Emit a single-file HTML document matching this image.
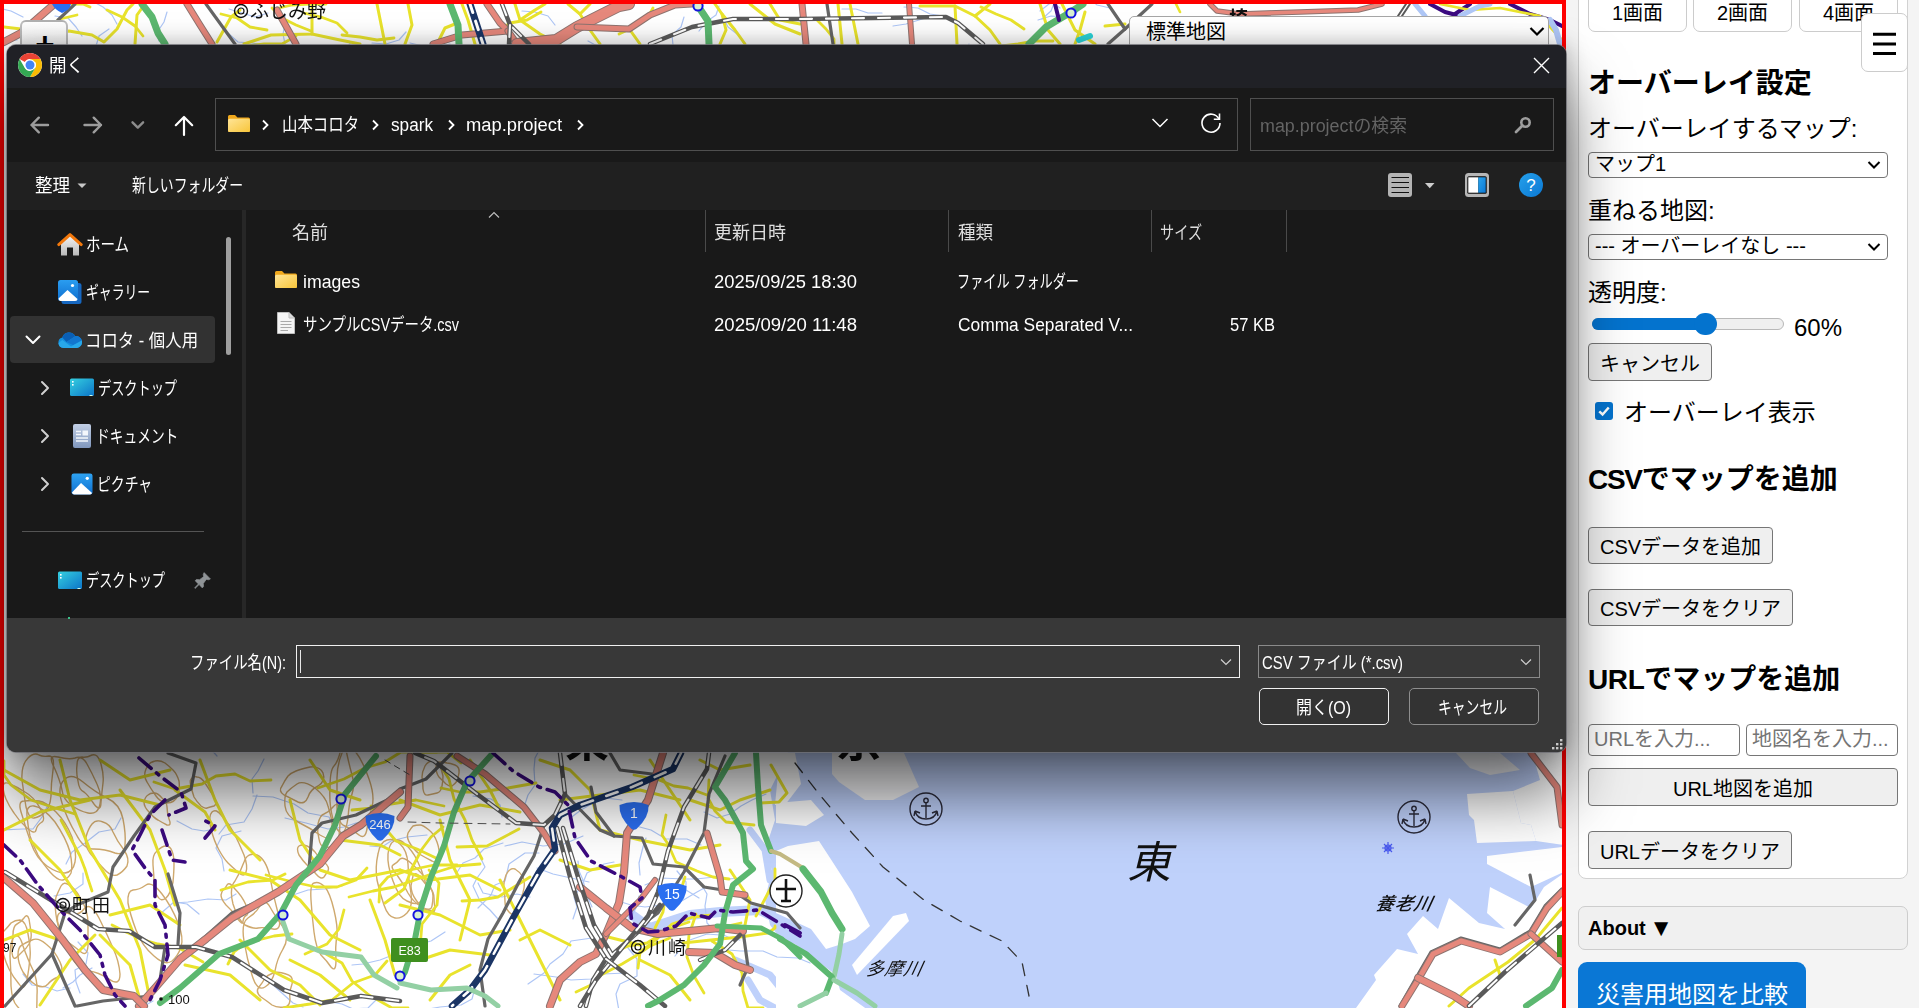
<!DOCTYPE html>
<html lang="ja">
<head>
<meta charset="utf-8">
<title>map.project</title>
<style>
*{box-sizing:border-box;margin:0;padding:0}
html,body{width:1919px;height:1008px;overflow:hidden;background:#f4f4f4;font-family:"Liberation Sans","Noto Sans CJK JP",sans-serif;color:#000}
.abs{position:absolute}
#map{position:absolute;left:0;top:0;width:1566px;height:1020px;border:4px solid #ff0000;background:#fff;overflow:hidden}
#mapsvg{position:absolute;left:0;top:0;filter:blur(.45px)}
/* ---------- dialog ---------- */
#dlg{position:absolute;left:7px;top:45px;width:1559px;height:707px;border-radius:9px;background:#191919;overflow:hidden;color:#fff;font-family:"Liberation Sans","Noto Sans CJK JP",sans-serif;font-size:17px;box-shadow:0 0 0 1px rgba(110,110,116,.8),0 44px 64px rgba(0,0,0,.55),0 0 24px rgba(0,0,0,.28)}
#dlg .t{position:absolute;transform-origin:0 50%;white-space:nowrap;line-height:24px;height:24px;margin-top:-11px}
#title{position:absolute;left:0;top:0;width:100%;height:43px;background:#202126}
#navrow{position:absolute;left:0;top:43px;width:100%;height:74px;background:#191919}
#toolrow{position:absolute;left:0;top:117px;width:100%;height:48px;background:#202020}
#bottom{position:absolute;left:0;top:573px;width:100%;height:134px;background:#383838}
.box{position:absolute;border:1px solid #4f4f4f}
/* ---------- side panel ---------- */
#panel{position:absolute;left:1578px;top:-20px;width:330px;height:899px;background:#fff;border:1px solid #d2d2d2;border-radius:8px}
.sp{position:absolute;white-space:nowrap}
.lbl{font-size:24px;line-height:30px;height:30px;margin-top:-14px}
.h3{font-size:28px;font-weight:bold;line-height:36px;height:36px;margin-top:-16px}
.h3 i{font-style:normal;letter-spacing:-1.3px}
.h3 b{letter-spacing:-.4px}
.btn{position:absolute;padding-top:1.5px;background:#efefef;border:1px solid #767676;border-radius:4px;font-size:20px;text-align:center;white-space:nowrap}
.sel{position:absolute;background:#fff;border:1px solid #767676;border-radius:4px;font-size:20px;white-space:nowrap}
.inp{position:absolute;background:#fff;border:1px solid #767676;border-radius:4px;font-size:20px;color:#757575;white-space:nowrap;overflow:hidden}
</style>
</head>
<body>
<div id="map">
<svg id="mapsvg" width="1558" height="1004" viewBox="4 4 1558 1004">
<rect x="0" y="0" width="1570" height="1010" fill="#fff"/>
<path d="M790 748 L1570 748 L1570 1010 L868 1010 L840 990 L836 975 L800 950 L780 938 L770 925 L765 900 L772 870 L765 850 L775 820 L770 790 L780 770z" fill="#bfd1fb"/>
<path d="M632 915 L650 928 L690 915 L720 912 L760 910 L790 925" stroke="#bfd1fb" stroke-width="10" fill="none" stroke-linejoin="round" stroke-linecap="round" />
<path d="M748 980 L760 1000 L775 1008" stroke="#bfd1fb" stroke-width="7" fill="none" stroke-linejoin="round" stroke-linecap="round" />
<path d="M735 960 L770 975 L790 1000" stroke="#bfd1fb" stroke-width="7" fill="none" stroke-linejoin="round" stroke-linecap="round" />
<path d="M750 830 L765 850 L770 880" stroke="#bfd1fb" stroke-width="7" fill="none" stroke-linejoin="round" stroke-linecap="round" />
<path d="M832 753 L904 753 L919 787 L893 800 L865 800 L839 782 L832 774z" fill="#f4f4f6"/>
<path d="M780 753 L795 753 L801 784 L785 805 L775 805z" fill="#fff"/>
<path d="M776 803 L811 800 L824 815 L806 826 L776 823z" fill="#fff"/>
<path d="M776 851 L788 846 L819 841 L832 861 L852 892 L870 926 L855 939 L842 944 L826 949 L811 929 L776 913z" fill="#fff"/>
<path d="M852 965 L893 916 L906 913 L909 921 L857 975z" fill="#fff"/>
<path d="M776 939 L795 944 L832 972 L837 988 L819 1008 L776 1008z" fill="#fff"/>
<path d="M1531 748 L1570 748 L1570 846 L1536 841 L1531 825 L1521 823 L1513 791 L1540 780z" fill="#fff"/>
<path d="M1467 794 L1513 791 L1521 823 L1531 825 L1536 841 L1477 843 L1474 820 L1469 815z" fill="#fff"/>
<path d="M1456 753 L1500 753 L1520 770 L1490 775 L1470 768z" fill="#f2f3f7"/>
<path d="M1487 856 L1570 846 L1570 869 L1531 887 L1487 864z" fill="#fff"/>
<path d="M1356 1008 L1376 980 L1374 975 L1397 949 L1418 954 L1407 934 L1423 916 L1438 929 L1449 898 L1479 923 L1505 929 L1487 913 L1490 887 L1531 908 L1544 887 L1570 869 L1570 1010z" fill="#fff"/>
<path d="M253 793 L252 779 L258 771 L264 759" stroke="#aec6f6" stroke-width="1.2" fill="none" stroke-linejoin="round" stroke-linecap="round" />
<path d="M54 896 L70 893 L83 884 L83 873" stroke="#aec6f6" stroke-width="1.2" fill="none" stroke-linejoin="round" stroke-linecap="round" />
<path d="M622 800 L605 798 L593 803 L581 810 L569 819" stroke="#aec6f6" stroke-width="1.2" fill="none" stroke-linejoin="round" stroke-linecap="round" />
<path d="M534 816 L524 807 L528 795 L535 785 L534 769 L535 758 L542 745" stroke="#aec6f6" stroke-width="1.2" fill="none" stroke-linejoin="round" stroke-linecap="round" />
<path d="M352 965 L363 964 L380 960 L398 953 L416 945 L431 941 L445 932" stroke="#aec6f6" stroke-width="1.2" fill="none" stroke-linejoin="round" stroke-linecap="round" />
<path d="M698 879 L707 894 L705 906 L707 923 L715 931 L730 938 L740 940" stroke="#aec6f6" stroke-width="1.2" fill="none" stroke-linejoin="round" stroke-linecap="round" />
<path d="M287 897 L308 890 L325 889 L342 886" stroke="#aec6f6" stroke-width="1.2" fill="none" stroke-linejoin="round" stroke-linecap="round" />
<path d="M153 1001 L144 1006 L140 1017 L148 1030" stroke="#aec6f6" stroke-width="1.2" fill="none" stroke-linejoin="round" stroke-linecap="round" />
<path d="M121 818 L115 829 L99 832 L85 843 L72 852 L66 864" stroke="#aec6f6" stroke-width="1.2" fill="none" stroke-linejoin="round" stroke-linecap="round" />
<path d="M528 984 L544 973 L550 964 L563 954 L571 941 L592 938" stroke="#aec6f6" stroke-width="1.2" fill="none" stroke-linejoin="round" stroke-linecap="round" />
<path d="M624 940 L628 948 L637 959 L637 976 L620 984 L616 994 L619 1011" stroke="#aec6f6" stroke-width="1.2" fill="none" stroke-linejoin="round" stroke-linecap="round" />
<path d="M640 875 L639 863 L643 847 L646 838" stroke="#aec6f6" stroke-width="1.2" fill="none" stroke-linejoin="round" stroke-linecap="round" />
<path d="M720 935 L707 934 L687 941 L675 956" stroke="#aec6f6" stroke-width="1.2" fill="none" stroke-linejoin="round" stroke-linecap="round" />
<path d="M503 843 L484 849 L475 858 L463 863 L456 874" stroke="#aec6f6" stroke-width="1.2" fill="none" stroke-linejoin="round" stroke-linecap="round" />
<path d="M583 836 L564 844 L543 846 L522 842 L505 846" stroke="#aec6f6" stroke-width="1.2" fill="none" stroke-linejoin="round" stroke-linecap="round" />
<path d="M592 907 L586 893 L583 880 L579 871 L578 861" stroke="#aec6f6" stroke-width="1.2" fill="none" stroke-linejoin="round" stroke-linecap="round" />
<path d="M589 882 L571 878 L553 874 L537 868" stroke="#aec6f6" stroke-width="1.2" fill="none" stroke-linejoin="round" stroke-linecap="round" />
<path d="M534 974 L556 977 L571 980 L591 979 L603 974 L626 973" stroke="#aec6f6" stroke-width="1.2" fill="none" stroke-linejoin="round" stroke-linecap="round" />
<path d="M285 818 L306 823 L328 829 L344 827 L356 823 L366 822 L376 821" stroke="#aec6f6" stroke-width="1.2" fill="none" stroke-linejoin="round" stroke-linecap="round" />
<path d="M478 883 L483 893 L502 897 L517 894 L530 897" stroke="#aec6f6" stroke-width="1.2" fill="none" stroke-linejoin="round" stroke-linecap="round" />
<path d="M699 898 L686 890 L686 882 L677 871" stroke="#aec6f6" stroke-width="1.2" fill="none" stroke-linejoin="round" stroke-linecap="round" />
<path d="M177 821 L192 829 L204 831 L215 829" stroke="#aec6f6" stroke-width="1.2" fill="none" stroke-linejoin="round" stroke-linecap="round" />
<path d="M48 805 L42 817 L33 829 L23 829 L-1 830 L-15 837" stroke="#aec6f6" stroke-width="1.2" fill="none" stroke-linejoin="round" stroke-linecap="round" />
<path d="M498 919 L490 910 L480 901 L473 886 L477 878 L485 867 L479 855" stroke="#aec6f6" stroke-width="1.2" fill="none" stroke-linejoin="round" stroke-linecap="round" />
<path d="M389 998 L377 999 L368 1008 L353 1009 L342 1004 L331 1002" stroke="#aec6f6" stroke-width="1.2" fill="none" stroke-linejoin="round" stroke-linecap="round" />
<path d="M502 817 L500 805 L491 799 L473 796" stroke="#aec6f6" stroke-width="1.2" fill="none" stroke-linejoin="round" stroke-linecap="round" />
<path d="M573 919 L577 907 L574 897 L582 885 L587 873 L604 864 L614 862" stroke="#aec6f6" stroke-width="1.2" fill="none" stroke-linejoin="round" stroke-linecap="round" />
<path d="M608 933 L615 921 L630 919 L636 908 L639 896" stroke="#aec6f6" stroke-width="1.2" fill="none" stroke-linejoin="round" stroke-linecap="round" />
<path d="M63 988 L73 982 L80 975 L92 968" stroke="#aec6f6" stroke-width="1.2" fill="none" stroke-linejoin="round" stroke-linecap="round" />
<path d="M742 878 L728 879 L715 877 L696 879 L684 879 L661 878 L645 885" stroke="#aec6f6" stroke-width="1.2" fill="none" stroke-linejoin="round" stroke-linecap="round" />
<path d="M224 871 L222 859 L216 848 L222 836 L241 831" stroke="#aec6f6" stroke-width="1.2" fill="none" stroke-linejoin="round" stroke-linecap="round" />
<path d="M78 942 L88 953 L86 964 L75 970 L76 982 L80 993" stroke="#aec6f6" stroke-width="1.2" fill="none" stroke-linejoin="round" stroke-linecap="round" />
<path d="M247 965 L257 974 L271 983 L283 994 L293 1003 L303 1007" stroke="#aec6f6" stroke-width="1.2" fill="none" stroke-linejoin="round" stroke-linecap="round" />
<path d="M636 826 L651 830 L666 839 L687 839 L701 845" stroke="#aec6f6" stroke-width="1.2" fill="none" stroke-linejoin="round" stroke-linecap="round" />
<path d="M70 988 L57 991 L46 987 L32 985 L23 974" stroke="#aec6f6" stroke-width="1.2" fill="none" stroke-linejoin="round" stroke-linecap="round" />
<path d="M236 894 L226 900 L208 899 L188 902 L174 903" stroke="#aec6f6" stroke-width="1.2" fill="none" stroke-linejoin="round" stroke-linecap="round" />
<path d="M427 835 L407 837 L391 841 L382 847 L370 846" stroke="#aec6f6" stroke-width="1.2" fill="none" stroke-linejoin="round" stroke-linecap="round" />
<path d="M482 971 L476 984 L472 999 L461 1005 L440 1007 L429 1009" stroke="#aec6f6" stroke-width="1.2" fill="none" stroke-linejoin="round" stroke-linecap="round" />
<path d="M706 887 L697 892 L680 902 L662 905 L645 907 L631 905 L618 901" stroke="#aec6f6" stroke-width="1.2" fill="none" stroke-linejoin="round" stroke-linecap="round" />
<path d="M199 914 L187 904 L174 902 L160 914" stroke="#aec6f6" stroke-width="1.2" fill="none" stroke-linejoin="round" stroke-linecap="round" />
<path d="M219 834 L226 825 L244 822 L252 809 L257 795" stroke="#aec6f6" stroke-width="1.2" fill="none" stroke-linejoin="round" stroke-linecap="round" />
<path d="M704 812 L717 818 L730 814 L741 806 L752 800 L766 794" stroke="#aec6f6" stroke-width="1.2" fill="none" stroke-linejoin="round" stroke-linecap="round" />
<path d="M478 908 L491 895 L495 885 L505 881 L509 864 L525 853 L539 853" stroke="#aec6f6" stroke-width="1.2" fill="none" stroke-linejoin="round" stroke-linecap="round" />
<path d="M712 942 L729 950 L740 951 L763 951 L777 957 L798 958 L810 963" stroke="#aec6f6" stroke-width="1.2" fill="none" stroke-linejoin="round" stroke-linecap="round" />
<path d="M345 836 L333 825 L329 817 L308 813 L294 804 L273 797 L253 796" stroke="#aec6f6" stroke-width="1.2" fill="none" stroke-linejoin="round" stroke-linecap="round" />
<path d="M217 756 L208 746 L208 735 L202 723" stroke="#aec6f6" stroke-width="1.2" fill="none" stroke-linejoin="round" stroke-linecap="round" />
<path d="M1040 11 L1049 4 L1062 0 L1076 1" stroke="#aec6f6" stroke-width="1.2" fill="none" stroke-linejoin="round" stroke-linecap="round" />
<path d="M684 17 L681 27 L672 35 L673 45" stroke="#aec6f6" stroke-width="1.2" fill="none" stroke-linejoin="round" stroke-linecap="round" />
<path d="M229 34 L238 42 L252 43 L266 45" stroke="#aec6f6" stroke-width="1.2" fill="none" stroke-linejoin="round" stroke-linecap="round" />
<path d="M372 43 L386 44 L399 40 L406 32" stroke="#aec6f6" stroke-width="1.2" fill="none" stroke-linejoin="round" stroke-linecap="round" />
<path d="M117 24 L112 15 L103 7 L92 1" stroke="#aec6f6" stroke-width="1.2" fill="none" stroke-linejoin="round" stroke-linecap="round" />
<path d="M699 31 L706 22 L716 15 L719 6" stroke="#aec6f6" stroke-width="1.2" fill="none" stroke-linejoin="round" stroke-linecap="round" />
<path d="M943 16 L930 14 L918 8 L904 7" stroke="#aec6f6" stroke-width="1.2" fill="none" stroke-linejoin="round" stroke-linecap="round" />
<path d="M285 14 L285 24 L283 34 L285 44" stroke="#aec6f6" stroke-width="1.2" fill="none" stroke-linejoin="round" stroke-linecap="round" />
<path d="M450 44 L437 47 L423 46 L410 43" stroke="#aec6f6" stroke-width="1.2" fill="none" stroke-linejoin="round" stroke-linecap="round" />
<path d="M1110 8 L1097 5 L1088 -3 L1088 -13" stroke="#aec6f6" stroke-width="1.2" fill="none" stroke-linejoin="round" stroke-linecap="round" />
<path d="M55 16 L68 18 L76 27 L82 36" stroke="#aec6f6" stroke-width="1.2" fill="none" stroke-linejoin="round" stroke-linecap="round" />
<path d="M1042 19 L1051 11 L1055 1 L1064 -6" stroke="#aec6f6" stroke-width="1.2" fill="none" stroke-linejoin="round" stroke-linecap="round" />
<path d="M1060 8 L1050 1 L1037 -2 L1023 -4" stroke="#aec6f6" stroke-width="1.2" fill="none" stroke-linejoin="round" stroke-linecap="round" />
<path d="M167 12 L164 22 L158 31 L159 41" stroke="#aec6f6" stroke-width="1.2" fill="none" stroke-linejoin="round" stroke-linecap="round" />
<path d="M23 17 L11 11 L-2 8 L-16 10" stroke="#aec6f6" stroke-width="1.2" fill="none" stroke-linejoin="round" stroke-linecap="round" />
<path d="M893 26 L906 24 L919 20 L932 16" stroke="#aec6f6" stroke-width="1.2" fill="none" stroke-linejoin="round" stroke-linecap="round" />
<path d="M719 8 L723 17 L728 27 L737 34" stroke="#aec6f6" stroke-width="1.2" fill="none" stroke-linejoin="round" stroke-linecap="round" />
<path d="M351 42 L345 51 L341 61 L339 70" stroke="#aec6f6" stroke-width="1.2" fill="none" stroke-linejoin="round" stroke-linecap="round" />
<path d="M969 44 L966 54 L958 62 L957 72" stroke="#aec6f6" stroke-width="1.2" fill="none" stroke-linejoin="round" stroke-linecap="round" />
<path d="M17 40 L3 40 L-11 41 L-24 36" stroke="#aec6f6" stroke-width="1.2" fill="none" stroke-linejoin="round" stroke-linecap="round" />
<path d="M522 11 L535 12 L548 16 L555 25" stroke="#aec6f6" stroke-width="1.2" fill="none" stroke-linejoin="round" stroke-linecap="round" />
<path d="M109 29 L99 36 L96 46 L98 56" stroke="#aec6f6" stroke-width="1.2" fill="none" stroke-linejoin="round" stroke-linecap="round" />
<path d="M588 41 L599 47 L605 56 L601 66" stroke="#aec6f6" stroke-width="1.2" fill="none" stroke-linejoin="round" stroke-linecap="round" />
<path d="M229 9 L242 13 L255 17 L268 13" stroke="#aec6f6" stroke-width="1.2" fill="none" stroke-linejoin="round" stroke-linecap="round" />
<path d="M1038 20 L1051 16 L1065 17 L1077 12" stroke="#aec6f6" stroke-width="1.2" fill="none" stroke-linejoin="round" stroke-linecap="round" />
<path d="M882 13 L868 13 L856 9 L842 9" stroke="#aec6f6" stroke-width="1.2" fill="none" stroke-linejoin="round" stroke-linecap="round" />
<path d="M283 927Q290 938 283 949Q277 959 275 971Q272 983 265 987Q257 992 252 975Q247 959 244 941Q241 923 248 918Q256 913 260 906Q265 898 270 907Q275 916 283 927z" stroke="#cfa96e" stroke-width="1.4" fill="none"/>
<path d="M235 889Q242 896 246 905Q249 913 247 915Q244 916 243 921Q243 926 237 918Q232 910 226 905Q221 899 221 895Q222 891 223 890Q225 889 227 885Q229 881 235 889z" stroke="#cfa96e" stroke-width="1.4" fill="none"/>
<path d="M107 798Q120 804 123 819Q126 834 125 845Q125 856 115 853Q105 849 94 849Q84 850 76 834Q67 819 62 803Q57 787 64 780Q71 772 83 782Q95 792 107 798z" stroke="#cfa96e" stroke-width="1.4" fill="none"/>
<path d="M162 798Q167 802 167 807Q167 812 169 819Q172 826 167 825Q163 823 158 820Q154 818 149 812Q144 807 144 802Q145 797 148 795Q150 793 154 793Q158 793 162 798z" stroke="#cfa96e" stroke-width="1.4" fill="none"/>
<path d="M323 773Q326 781 318 786Q310 790 308 797Q305 805 298 802Q290 798 284 795Q278 791 282 786Q285 780 288 776Q291 773 296 771Q301 769 310 767Q320 766 323 773z" stroke="#cfa96e" stroke-width="1.4" fill="none"/>
<path d="M99 918Q107 934 113 948Q119 961 120 974Q120 987 109 979Q98 972 89 971Q79 971 70 955Q61 940 58 924Q55 909 67 913Q78 917 84 909Q90 901 99 918z" stroke="#cfa96e" stroke-width="1.4" fill="none"/>
<path d="M55 822Q66 838 70 852Q73 867 71 873Q68 879 63 880Q58 881 50 872Q43 864 38 855Q33 845 30 836Q28 827 27 816Q26 805 34 806Q43 807 55 822z" stroke="#cfa96e" stroke-width="1.4" fill="none"/>
<path d="M87 764Q92 773 97 784Q102 794 100 804Q98 815 88 813Q79 811 71 805Q63 799 62 790Q60 780 54 767Q47 754 58 757Q69 760 75 758Q82 755 87 764z" stroke="#cfa96e" stroke-width="1.4" fill="none"/>
<path d="M369 779Q375 796 372 807Q368 818 367 829Q365 840 359 835Q353 830 345 826Q337 823 337 807Q337 790 337 778Q337 765 342 753Q346 741 355 751Q363 761 369 779z" stroke="#cfa96e" stroke-width="1.4" fill="none"/>
<path d="M417 860Q422 870 425 881Q428 892 425 896Q422 900 419 903Q415 905 407 901Q399 898 393 881Q387 865 388 854Q389 844 394 841Q399 838 405 844Q412 850 417 860z" stroke="#cfa96e" stroke-width="1.4" fill="none"/>
<path d="M56 812Q66 822 72 837Q77 853 75 862Q73 872 65 873Q57 873 47 866Q36 858 31 843Q26 829 22 815Q17 801 24 801Q32 800 39 801Q46 802 56 812z" stroke="#cfa96e" stroke-width="1.4" fill="none"/>
<path d="M334 910Q338 927 337 936Q335 946 336 960Q336 973 331 967Q327 961 321 955Q316 948 314 932Q312 916 311 900Q310 884 314 883Q319 881 325 887Q330 893 334 910z" stroke="#cfa96e" stroke-width="1.4" fill="none"/>
<path d="M162 894Q172 907 178 923Q184 938 181 947Q178 956 172 961Q165 966 154 956Q142 946 136 930Q130 914 128 903Q127 891 133 890Q139 890 146 885Q152 881 162 894z" stroke="#cfa96e" stroke-width="1.4" fill="none"/>
<path d="M408 864Q408 878 411 893Q413 907 407 913Q401 919 395 918Q388 917 384 905Q380 894 377 880Q375 867 378 854Q380 842 387 840Q394 838 400 844Q407 850 408 864z" stroke="#cfa96e" stroke-width="1.4" fill="none"/>
<path d="M25 792Q34 797 40 808Q46 820 42 822Q37 825 36 830Q35 835 27 828Q19 821 14 813Q9 806 6 799Q3 792 3 786Q4 781 10 784Q17 787 25 792z" stroke="#cfa96e" stroke-width="1.4" fill="none"/>
<path d="M101 764Q104 775 103 783Q102 791 101 802Q101 813 94 804Q88 795 84 792Q79 790 78 781Q76 773 77 765Q77 757 82 757Q86 758 92 755Q98 753 101 764z" stroke="#cfa96e" stroke-width="1.4" fill="none"/>
<path d="M173 770Q177 774 179 781Q180 788 178 795Q175 803 167 803Q160 802 156 796Q151 789 147 782Q143 776 146 769Q149 762 155 761Q160 760 165 763Q169 766 173 770z" stroke="#cfa96e" stroke-width="1.4" fill="none"/>
<path d="M270 877Q273 895 278 913Q283 931 273 929Q263 927 258 928Q253 929 245 925Q238 920 233 904Q229 888 235 881Q240 873 244 862Q247 852 257 855Q266 859 270 877z" stroke="#cfa96e" stroke-width="1.4" fill="none"/>
<path d="M174 864Q174 871 173 882Q171 893 166 898Q161 902 158 897Q154 892 154 884Q154 875 153 865Q152 855 157 851Q162 846 166 846Q170 846 172 851Q174 856 174 864z" stroke="#cfa96e" stroke-width="1.4" fill="none"/>
<path d="M413 865Q423 874 428 882Q433 891 433 896Q433 901 432 906Q431 912 422 907Q413 902 408 893Q403 883 397 875Q390 867 393 865Q397 863 400 859Q404 856 413 865z" stroke="#cfa96e" stroke-width="1.4" fill="none"/>
<path d="M340 822Q340 828 339 836Q337 843 333 846Q329 848 324 847Q320 846 319 839Q317 832 318 824Q320 815 324 814Q329 812 333 807Q338 801 339 809Q340 816 340 822z" stroke="#cfa96e" stroke-width="1.4" fill="none"/>
<path d="M234 833Q239 843 244 855Q248 866 246 872Q244 878 238 872Q232 867 228 863Q224 859 219 850Q214 841 211 829Q208 816 212 812Q216 808 222 816Q229 824 234 833z" stroke="#cfa96e" stroke-width="1.4" fill="none"/>
<path d="M28 934Q31 947 30 958Q29 969 27 980Q24 992 19 984Q13 977 9 969Q5 961 2 949Q-2 937 3 932Q8 927 11 923Q15 920 20 920Q26 921 28 934z" stroke="#cfa96e" stroke-width="1.4" fill="none"/>
<path d="M46 944Q55 951 60 962Q65 973 58 977Q51 980 48 984Q44 989 36 985Q29 981 23 972Q18 963 18 955Q18 947 22 945Q27 942 32 940Q38 937 46 944z" stroke="#cfa96e" stroke-width="1.4" fill="none"/>
<path d="M352 775Q355 785 352 794Q349 803 348 818Q346 832 342 833Q337 833 333 819Q329 805 330 788Q330 770 334 766Q338 762 341 749Q344 736 346 750Q349 764 352 775z" stroke="#cfa96e" stroke-width="1.4" fill="none"/>
<path d="M286 974Q294 976 292 984Q289 992 290 999Q290 1007 284 1007Q277 1008 272 1005Q267 1001 261 997Q255 992 259 987Q263 982 265 978Q268 975 273 973Q278 971 286 974z" stroke="#cfa96e" stroke-width="1.4" fill="none"/>
<path d="M53 770Q51 784 51 796Q50 808 45 812Q40 817 34 818Q29 819 26 807Q24 795 22 780Q21 765 28 758Q34 752 39 755Q43 757 49 756Q55 756 53 770z" stroke="#cfa96e" stroke-width="1.4" fill="none"/>
<path d="M81 899Q88 911 88 923Q88 935 88 946Q87 957 81 952Q75 947 68 942Q61 937 57 921Q54 905 56 897Q59 890 61 886Q64 881 69 885Q75 888 81 899z" stroke="#cfa96e" stroke-width="1.4" fill="none"/>
<path d="M315 788Q326 797 328 806Q331 816 332 822Q333 828 331 835Q330 841 320 835Q310 828 298 822Q286 816 285 806Q284 796 287 792Q291 788 297 784Q303 780 315 788z" stroke="#cfa96e" stroke-width="1.4" fill="none"/>
<path d="M31 932Q32 938 29 944Q26 949 23 951Q21 953 17 957Q13 961 12 953Q12 944 13 935Q13 926 17 924Q21 922 24 918Q27 913 29 919Q30 925 31 932z" stroke="#cfa96e" stroke-width="1.4" fill="none"/>
<path d="M113 832Q117 841 124 850Q130 859 127 866Q123 872 117 875Q111 877 104 869Q97 862 90 853Q84 845 86 837Q88 829 92 824Q96 819 103 822Q110 824 113 832z" stroke="#cfa96e" stroke-width="1.4" fill="none"/>
<path d="M315 852Q318 857 324 862Q330 867 328 871Q326 874 324 877Q321 880 316 874Q312 868 307 865Q303 861 299 855Q296 848 299 846Q302 844 307 846Q312 848 315 852z" stroke="#cfa96e" stroke-width="1.4" fill="none"/>
<path d="M205 783Q209 789 214 797Q218 804 214 806Q210 807 207 808Q205 809 201 806Q197 802 194 797Q192 791 191 786Q189 780 192 778Q194 776 197 777Q201 777 205 783z" stroke="#cfa96e" stroke-width="1.4" fill="none"/>
<path d="M33 970Q38 981 37 995Q37 1009 36 1024Q34 1039 28 1025Q22 1011 17 1006Q12 1001 11 986Q11 971 10 956Q10 941 14 937Q19 932 23 946Q28 960 33 970z" stroke="#cfa96e" stroke-width="1.4" fill="none"/>
<path d="M455 765Q460 767 459 773Q458 778 457 781Q455 784 452 786Q450 787 446 784Q443 781 439 777Q436 773 436 767Q436 762 440 762Q444 762 447 763Q450 763 455 765z" stroke="#cfa96e" stroke-width="1.4" fill="none"/>
<path d="M524 888Q523 894 521 898Q519 903 516 910Q513 917 509 912Q505 908 505 902Q505 896 504 889Q503 883 506 875Q510 867 515 869Q520 872 523 877Q525 882 524 888z" stroke="#cfa96e" stroke-width="1.4" fill="none"/>
<path d="M443 776Q443 781 442 786Q441 792 437 793Q433 794 428 795Q424 796 423 789Q423 783 422 777Q422 772 425 766Q428 761 433 761Q438 761 440 766Q442 771 443 776z" stroke="#cfa96e" stroke-width="1.4" fill="none"/>
<path d="M430 888Q434 892 434 898Q434 903 435 908Q435 913 432 911Q428 910 424 909Q421 907 416 900Q411 893 411 886Q412 880 413 876Q415 871 420 877Q425 884 430 888z" stroke="#cfa96e" stroke-width="1.4" fill="none"/>
<path d="M429 830Q434 834 437 842Q440 850 439 858Q439 865 432 861Q426 858 421 855Q416 852 411 845Q406 838 408 833Q411 828 413 826Q416 825 420 825Q423 825 429 830z" stroke="#cfa96e" stroke-width="1.4" fill="none"/>
<path d="M4 770 L40 790 L80 800 L120 795 L160 805" stroke="#e9e32c" stroke-width="3" fill="none" stroke-linejoin="round" stroke-linecap="round" />
<path d="M60 760 L70 800 L90 850 L120 900 L140 950 L150 1000" stroke="#e9e32c" stroke-width="3" fill="none" stroke-linejoin="round" stroke-linecap="round" />
<path d="M4 830 L40 812 L90 800" stroke="#e9e32c" stroke-width="3" fill="none" stroke-linejoin="round" stroke-linecap="round" />
<path d="M30 840 L60 870 L80 900" stroke="#e9e32c" stroke-width="3" fill="none" stroke-linejoin="round" stroke-linecap="round" />
<path d="M4 940 L30 930 L60 940" stroke="#e9e32c" stroke-width="3" fill="none" stroke-linejoin="round" stroke-linecap="round" />
<path d="M40 1005 L70 960 L95 935" stroke="#e9e32c" stroke-width="3" fill="none" stroke-linejoin="round" stroke-linecap="round" />
<path d="M100 760 L130 780 L170 770" stroke="#e9e32c" stroke-width="3" fill="none" stroke-linejoin="round" stroke-linecap="round" />
<path d="M120 790 L150 830 L165 870 L175 905" stroke="#e9e32c" stroke-width="3" fill="none" stroke-linejoin="round" stroke-linecap="round" />
<path d="M200 760 L215 800 L230 830 L260 860" stroke="#e9e32c" stroke-width="3" fill="none" stroke-linejoin="round" stroke-linecap="round" />
<path d="M175 790 L205 812 L215 830" stroke="#e9e32c" stroke-width="3" fill="none" stroke-linejoin="round" stroke-linecap="round" />
<path d="M110 915 L150 905 L180 925" stroke="#e9e32c" stroke-width="3" fill="none" stroke-linejoin="round" stroke-linecap="round" />
<path d="M100 935 L130 965 L140 1000" stroke="#e9e32c" stroke-width="3" fill="none" stroke-linejoin="round" stroke-linecap="round" />
<path d="M230 870 L270 880 L300 900 L330 935 L360 950" stroke="#e9e32c" stroke-width="3" fill="none" stroke-linejoin="round" stroke-linecap="round" />
<path d="M290 800 L300 840 L320 870 L350 880 L400 870" stroke="#e9e32c" stroke-width="3" fill="none" stroke-linejoin="round" stroke-linecap="round" />
<path d="M310 760 L330 790 L360 800" stroke="#e9e32c" stroke-width="3" fill="none" stroke-linejoin="round" stroke-linecap="round" />
<path d="M340 840 L380 845 L400 855" stroke="#e9e32c" stroke-width="3" fill="none" stroke-linejoin="round" stroke-linecap="round" />
<path d="M290 960 L320 975 L350 1000" stroke="#e9e32c" stroke-width="3" fill="none" stroke-linejoin="round" stroke-linecap="round" />
<path d="M240 940 L270 970 L300 985 L320 1005" stroke="#e9e32c" stroke-width="3" fill="none" stroke-linejoin="round" stroke-linecap="round" />
<path d="M370 900 L385 940 L395 975" stroke="#e9e32c" stroke-width="3" fill="none" stroke-linejoin="round" stroke-linecap="round" />
<path d="M185 965 L230 975 L260 1000" stroke="#e9e32c" stroke-width="3" fill="none" stroke-linejoin="round" stroke-linecap="round" />
<path d="M400 870 L430 880 L470 875 L500 890" stroke="#e9e32c" stroke-width="3" fill="none" stroke-linejoin="round" stroke-linecap="round" />
<path d="M400 800 L440 815 L480 805 L520 812" stroke="#e9e32c" stroke-width="3" fill="none" stroke-linejoin="round" stroke-linecap="round" />
<path d="M440 820 L450 860 L470 900 L460 940" stroke="#e9e32c" stroke-width="3" fill="none" stroke-linejoin="round" stroke-linecap="round" />
<path d="M400 905 L440 915 L480 935 L510 930" stroke="#e9e32c" stroke-width="3" fill="none" stroke-linejoin="round" stroke-linecap="round" />
<path d="M420 960 L450 950 L490 955" stroke="#e9e32c" stroke-width="3" fill="none" stroke-linejoin="round" stroke-linecap="round" />
<path d="M500 880 L520 920 L540 960 L560 1000" stroke="#e9e32c" stroke-width="3" fill="none" stroke-linejoin="round" stroke-linecap="round" />
<path d="M520 940 L540 930 L570 945" stroke="#e9e32c" stroke-width="3" fill="none" stroke-linejoin="round" stroke-linecap="round" />
<path d="M430 1000 L450 975 L470 965" stroke="#e9e32c" stroke-width="3" fill="none" stroke-linejoin="round" stroke-linecap="round" />
<path d="M540 760 L570 770 L590 790 L600 830" stroke="#e9e32c" stroke-width="3" fill="none" stroke-linejoin="round" stroke-linecap="round" />
<path d="M560 800 L600 795 L640 790 L680 800" stroke="#e9e32c" stroke-width="3" fill="none" stroke-linejoin="round" stroke-linecap="round" />
<path d="M600 830 L640 840 L690 850 L720 845" stroke="#e9e32c" stroke-width="3" fill="none" stroke-linejoin="round" stroke-linecap="round" />
<path d="M650 760 L670 790 L690 820" stroke="#e9e32c" stroke-width="3" fill="none" stroke-linejoin="round" stroke-linecap="round" />
<path d="M640 960 L670 975 L690 1000" stroke="#e9e32c" stroke-width="3" fill="none" stroke-linejoin="round" stroke-linecap="round" />
<path d="M600 935 L640 945" stroke="#e9e32c" stroke-width="3" fill="none" stroke-linejoin="round" stroke-linecap="round" />
<path d="M690 800 L720 810 L740 800 L770 790" stroke="#e9e32c" stroke-width="3" fill="none" stroke-linejoin="round" stroke-linecap="round" />
<path d="M700 760 L720 770 L750 765" stroke="#e9e32c" stroke-width="3" fill="none" stroke-linejoin="round" stroke-linecap="round" />
<path d="M560 860 L590 870 L620 865" stroke="#e9e32c" stroke-width="3" fill="none" stroke-linejoin="round" stroke-linecap="round" />
<path d="M470 760 L490 790 L500 810" stroke="#e9e32c" stroke-width="3" fill="none" stroke-linejoin="round" stroke-linecap="round" />
<path d="M730 870 L750 900 L745 925" stroke="#e9e32c" stroke-width="3" fill="none" stroke-linejoin="round" stroke-linecap="round" />
<path d="M4 27 L21 29 L45 36 L69 31 L92 35 L104 42 L117 29 L127 10 L133 4" stroke="#e9e32c" stroke-width="3" fill="none" stroke-linejoin="round" stroke-linecap="round" />
<path d="M135 44 L137 15 L142 8" stroke="#e9e32c" stroke-width="3" fill="none" stroke-linejoin="round" stroke-linecap="round" />
<path d="M217 42 L231 17 L240 10" stroke="#e9e32c" stroke-width="3" fill="none" stroke-linejoin="round" stroke-linecap="round" />
<path d="M244 44 L271 35 L312 34 L312 4" stroke="#e9e32c" stroke-width="3" fill="none" stroke-linejoin="round" stroke-linecap="round" />
<path d="M377 4 L385 44" stroke="#e9e32c" stroke-width="3" fill="none" stroke-linejoin="round" stroke-linecap="round" />
<path d="M312 34 L340 40 L360 44" stroke="#e9e32c" stroke-width="3" fill="none" stroke-linejoin="round" stroke-linecap="round" />
<path d="M408 4 L412 25 L405 44" stroke="#e9e32c" stroke-width="3" fill="none" stroke-linejoin="round" stroke-linecap="round" />
<path d="M437 44 L445 28 L455 24" stroke="#e9e32c" stroke-width="3" fill="none" stroke-linejoin="round" stroke-linecap="round" />
<path d="M462 4 L468 20 L475 44" stroke="#e9e32c" stroke-width="3" fill="none" stroke-linejoin="round" stroke-linecap="round" />
<path d="M515 4 L520 20 L535 10 L545 4" stroke="#e9e32c" stroke-width="3" fill="none" stroke-linejoin="round" stroke-linecap="round" />
<path d="M520 20 L540 34 L560 44" stroke="#e9e32c" stroke-width="3" fill="none" stroke-linejoin="round" stroke-linecap="round" />
<path d="M568 4 L580 14 L590 30 L600 44" stroke="#e9e32c" stroke-width="3" fill="none" stroke-linejoin="round" stroke-linecap="round" />
<path d="M590 4 L580 14" stroke="#e9e32c" stroke-width="3" fill="none" stroke-linejoin="round" stroke-linecap="round" />
<path d="M630 30 L640 44" stroke="#e9e32c" stroke-width="3" fill="none" stroke-linejoin="round" stroke-linecap="round" />
<path d="M715 4 L722 14 L726 30 L720 44" stroke="#e9e32c" stroke-width="3" fill="none" stroke-linejoin="round" stroke-linecap="round" />
<path d="M722 14 L735 30 L745 44" stroke="#e9e32c" stroke-width="3" fill="none" stroke-linejoin="round" stroke-linecap="round" />
<path d="M750 4 L760 12 L775 24 L800 34" stroke="#e9e32c" stroke-width="3" fill="none" stroke-linejoin="round" stroke-linecap="round" />
<path d="M770 4 L780 20 L800 24" stroke="#e9e32c" stroke-width="3" fill="none" stroke-linejoin="round" stroke-linecap="round" />
<path d="M838 4 L842 44" stroke="#e9e32c" stroke-width="3" fill="none" stroke-linejoin="round" stroke-linecap="round" />
<path d="M850 4 L858 44" stroke="#e9e32c" stroke-width="3" fill="none" stroke-linejoin="round" stroke-linecap="round" />
<path d="M920 6 L955 6 L975 16 L990 30 L1000 44" stroke="#e9e32c" stroke-width="3" fill="none" stroke-linejoin="round" stroke-linecap="round" />
<path d="M955 6 L957 44" stroke="#e9e32c" stroke-width="3" fill="none" stroke-linejoin="round" stroke-linecap="round" />
<path d="M975 16 L990 4" stroke="#e9e32c" stroke-width="3" fill="none" stroke-linejoin="round" stroke-linecap="round" />
<path d="M1040 4 L1048 30 L1060 44" stroke="#e9e32c" stroke-width="3" fill="none" stroke-linejoin="round" stroke-linecap="round" />
<path d="M1062 4 L1075 30 L1095 44" stroke="#e9e32c" stroke-width="3" fill="none" stroke-linejoin="round" stroke-linecap="round" />
<path d="M1085 12 L1080 30 L1075 44" stroke="#e9e32c" stroke-width="3" fill="none" stroke-linejoin="round" stroke-linecap="round" />
<path d="M1105 26 L1125 24" stroke="#e9e32c" stroke-width="3" fill="none" stroke-linejoin="round" stroke-linecap="round" />
<path d="M1449 1006 L1469 988 L1508 962 L1536 939 L1562 908" stroke="#e9e32c" stroke-width="3" fill="none" stroke-linejoin="round" stroke-linecap="round" />
<path d="M1495 960 L1500 975" stroke="#e9e32c" stroke-width="3" fill="none" stroke-linejoin="round" stroke-linecap="round" />
<path d="M771 765 L787 793 L779 802 L760 803" stroke="#e9e32c" stroke-width="3" fill="none" stroke-linejoin="round" stroke-linecap="round" />
<path d="M349 897 L373 891 L394 887 L412 881 L437 872 L456 866 L480 864" stroke="#e9e32c" stroke-width="2.8" fill="none" stroke-linejoin="round" stroke-linecap="round" />
<path d="M634 775 L659 780 L674 786 L688 788 L707 795" stroke="#e9e32c" stroke-width="2.8" fill="none" stroke-linejoin="round" stroke-linecap="round" />
<path d="M709 780 L708 798 L715 811 L726 822 L754 825" stroke="#e9e32c" stroke-width="2.8" fill="none" stroke-linejoin="round" stroke-linecap="round" />
<path d="M292 934 L274 936 L246 943 L234 952 L228 964" stroke="#e9e32c" stroke-width="2.8" fill="none" stroke-linejoin="round" stroke-linecap="round" />
<path d="M429 870 L439 883 L437 905 L422 924 L420 948" stroke="#e9e32c" stroke-width="2.8" fill="none" stroke-linejoin="round" stroke-linecap="round" />
<path d="M462 901 L480 900 L498 897 L514 887 L530 877" stroke="#e9e32c" stroke-width="2.8" fill="none" stroke-linejoin="round" stroke-linecap="round" />
<path d="M729 879 L713 877 L697 871 L676 862 L668 844 L662 835 L666 815" stroke="#e9e32c" stroke-width="2.8" fill="none" stroke-linejoin="round" stroke-linecap="round" />
<path d="M203 962 L179 948 L158 944 L144 940 L126 932 L112 925" stroke="#e9e32c" stroke-width="2.8" fill="none" stroke-linejoin="round" stroke-linecap="round" />
<path d="M221 890 L248 882 L273 880 L285 874" stroke="#e9e32c" stroke-width="2.8" fill="none" stroke-linejoin="round" stroke-linecap="round" />
<path d="M693 932 L708 930 L723 927 L741 923" stroke="#e9e32c" stroke-width="2.8" fill="none" stroke-linejoin="round" stroke-linecap="round" />
<path d="M712 941 L732 954 L742 973 L743 991 L748 1008 L763 1008" stroke="#e9e32c" stroke-width="2.8" fill="none" stroke-linejoin="round" stroke-linecap="round" />
<path d="M670 938 L650 946 L637 955 L622 964 L601 975 L591 985 L576 992" stroke="#e9e32c" stroke-width="2.8" fill="none" stroke-linejoin="round" stroke-linecap="round" />
<path d="M689 922 L669 929 L647 943 L628 946 L613 953" stroke="#e9e32c" stroke-width="2.8" fill="none" stroke-linejoin="round" stroke-linecap="round" />
<path d="M638 968 L640 952 L657 939 L672 924 L693 917 L712 915" stroke="#e9e32c" stroke-width="2.8" fill="none" stroke-linejoin="round" stroke-linecap="round" />
<path d="M519 829 L504 837 L487 846 L457 847" stroke="#e9e32c" stroke-width="2.8" fill="none" stroke-linejoin="round" stroke-linecap="round" />
<path d="M92 891 L88 879 L85 869 L80 856 L71 839 L61 820" stroke="#e9e32c" stroke-width="2.8" fill="none" stroke-linejoin="round" stroke-linecap="round" />
<path d="M305 954 L327 944 L339 929 L344 910" stroke="#e9e32c" stroke-width="2.8" fill="none" stroke-linejoin="round" stroke-linecap="round" />
<path d="M387 961 L375 975 L353 983 L332 1000 L310 1004 L284 1008" stroke="#e9e32c" stroke-width="2.8" fill="none" stroke-linejoin="round" stroke-linecap="round" />
<path d="M271 780 L250 781 L235 774 L216 776 L202 784 L175 789 L154 782" stroke="#e9e32c" stroke-width="2.8" fill="none" stroke-linejoin="round" stroke-linecap="round" />
<path d="M75 814 L55 808 L31 800 L11 785 L4 775 L4 761" stroke="#e9e32c" stroke-width="2.8" fill="none" stroke-linejoin="round" stroke-linecap="round" />
<path d="M318 788 L344 779 L365 768 L385 762 L401 752 L420 752 L437 752" stroke="#e9e32c" stroke-width="2.8" fill="none" stroke-linejoin="round" stroke-linecap="round" />
<path d="M685 877 L681 890 L665 899 L663 912 L655 928" stroke="#e9e32c" stroke-width="2.8" fill="none" stroke-linejoin="round" stroke-linecap="round" />
<path d="M385 903 L404 889 L412 868 L422 849 L431 837 L443 827" stroke="#e9e32c" stroke-width="2.8" fill="none" stroke-linejoin="round" stroke-linecap="round" />
<path d="M696 914 L689 935 L687 957 L694 976 L704 993" stroke="#e9e32c" stroke-width="2.8" fill="none" stroke-linejoin="round" stroke-linecap="round" />
<path d="M326 954 L342 963 L352 981 L369 995 L392 1008 L403 1008 L408 1008" stroke="#e9e32c" stroke-width="2.8" fill="none" stroke-linejoin="round" stroke-linecap="round" />
<path d="M371 806 L384 827 L396 841 L417 849 L436 858" stroke="#e9e32c" stroke-width="2.8" fill="none" stroke-linejoin="round" stroke-linecap="round" />
<path d="M461 763 L447 752 L435 752 L425 752 L414 752" stroke="#e9e32c" stroke-width="2.8" fill="none" stroke-linejoin="round" stroke-linecap="round" />
<path d="M482 859 L472 840 L465 820 L454 799 L449 779 L442 768" stroke="#e9e32c" stroke-width="2.8" fill="none" stroke-linejoin="round" stroke-linecap="round" />
<path d="M266 875 L289 881 L316 887 L337 887 L356 880 L367 868" stroke="#e9e32c" stroke-width="2.8" fill="none" stroke-linejoin="round" stroke-linecap="round" />
<path d="M441 788 L460 792 L480 792 L508 788 L536 783" stroke="#e9e32c" stroke-width="2.8" fill="none" stroke-linejoin="round" stroke-linecap="round" />
<path d="M756 916 L767 895 L775 880 L775 869" stroke="#e9e32c" stroke-width="2.8" fill="none" stroke-linejoin="round" stroke-linecap="round" />
<path d="M457 865 L434 865 L410 870 L388 877 L380 886 L379 902" stroke="#e9e32c" stroke-width="2.8" fill="none" stroke-linejoin="round" stroke-linecap="round" />
<path d="M683 943 L711 940 L740 937 L768 933 L775 928 L775 926" stroke="#e9e32c" stroke-width="2.8" fill="none" stroke-linejoin="round" stroke-linecap="round" />
<path d="M352 810 L373 808 L391 804 L416 800 L444 806" stroke="#e9e32c" stroke-width="2.8" fill="none" stroke-linejoin="round" stroke-linecap="round" />
<path d="M275 9 L292 5 L309 4 L326 4" stroke="#e9e32c" stroke-width="2.8" fill="none" stroke-linejoin="round" stroke-linecap="round" />
<path d="M311 31 L296 25 L282 18 L272 8" stroke="#e9e32c" stroke-width="2.8" fill="none" stroke-linejoin="round" stroke-linecap="round" />
<path d="M221 14 L237 18 L250 27 L267 30" stroke="#e9e32c" stroke-width="2.8" fill="none" stroke-linejoin="round" stroke-linecap="round" />
<path d="M77 15 L60 19 L48 27 L35 35" stroke="#e9e32c" stroke-width="2.8" fill="none" stroke-linejoin="round" stroke-linecap="round" />
<path d="M90 7 L83 4 L79 4 L72 4" stroke="#e9e32c" stroke-width="2.8" fill="none" stroke-linejoin="round" stroke-linecap="round" />
<path d="M541 12 L527 20 L510 23 L497 32" stroke="#e9e32c" stroke-width="2.8" fill="none" stroke-linejoin="round" stroke-linecap="round" />
<path d="M143 36 L135 26 L122 17 L107 10" stroke="#e9e32c" stroke-width="2.8" fill="none" stroke-linejoin="round" stroke-linecap="round" />
<path d="M296 36 L282 44 L264 44 L247 46" stroke="#e9e32c" stroke-width="2.8" fill="none" stroke-linejoin="round" stroke-linecap="round" />
<path d="M619 34 L634 27 L647 19 L653 8" stroke="#e9e32c" stroke-width="2.8" fill="none" stroke-linejoin="round" stroke-linecap="round" />
<path d="M981 7 L996 14 L1011 20 L1024 29" stroke="#e9e32c" stroke-width="2.8" fill="none" stroke-linejoin="round" stroke-linecap="round" />
<path d="M342 35 L360 37 L377 40 L394 38" stroke="#e9e32c" stroke-width="2.8" fill="none" stroke-linejoin="round" stroke-linecap="round" />
<path d="M347 33 L337 23 L321 17 L304 13" stroke="#e9e32c" stroke-width="2.8" fill="none" stroke-linejoin="round" stroke-linecap="round" />
<path d="M816 19 L826 29 L834 39 L834 46" stroke="#e9e32c" stroke-width="2.8" fill="none" stroke-linejoin="round" stroke-linecap="round" />
<path d="M1053 41 L1035 41 L1018 44 L1002 46" stroke="#e9e32c" stroke-width="2.8" fill="none" stroke-linejoin="round" stroke-linecap="round" />
<path d="M168 753 L196 763 L191 789 L155 807 L134 836 L113 867 L108 892 L77 905 L64 913" stroke="#666" stroke-width="3.2" fill="none" stroke-linejoin="round" stroke-linecap="round" />
<path d="M400 794 L356 815 L322 823 L312 833 L309 869 L281 892 L232 913 L206 936 L193 947" stroke="#666" stroke-width="3.2" fill="none" stroke-linejoin="round" stroke-linecap="round" />
<path d="M64 916 L52 954 L5 1006" stroke="#666" stroke-width="3.2" fill="none" stroke-linejoin="round" stroke-linecap="round" />
<path d="M52 954 L75 1006" stroke="#666" stroke-width="3.2" fill="none" stroke-linejoin="round" stroke-linecap="round" />
<path d="M168 874 L180 913 L178 944" stroke="#666" stroke-width="3.2" fill="none" stroke-linejoin="round" stroke-linecap="round" />
<path d="M165 947 L160 980 L150 996 L103 1001 L77 1006" stroke="#666" stroke-width="3.2" fill="none" stroke-linejoin="round" stroke-linecap="round" />
<path d="M400 789 L426 779 L452 753" stroke="#666" stroke-width="3.2" fill="none" stroke-linejoin="round" stroke-linecap="round" />
<path d="M544 825 L534 856 L519 882 L503 913 L488 939 L480 970 L485 1006" stroke="#666" stroke-width="3.2" fill="none" stroke-linejoin="round" stroke-linecap="round" />
<path d="M591 787 L596 812 L614 836 L642 838 L653 864 L684 867 L704 887 L735 892 L751 903 L787 913 L800 928" stroke="#666" stroke-width="3.2" fill="none" stroke-linejoin="round" stroke-linecap="round" />
<path d="M725 756 L709 794 L704 833 L684 872 L658 913 L637 928" stroke="#666" stroke-width="3.2" fill="none" stroke-linejoin="round" stroke-linecap="round" />
<path d="M560 753 L565 794 L600 830 L614 836" stroke="#666" stroke-width="3.2" fill="none" stroke-linejoin="round" stroke-linecap="round" />
<path d="M610 753 L620 770 L660 775" stroke="#666" stroke-width="3.2" fill="none" stroke-linejoin="round" stroke-linecap="round" />
<path d="M743 931 L748 967 L740 985" stroke="#666" stroke-width="3.2" fill="none" stroke-linejoin="round" stroke-linecap="round" />
<path d="M206 4 L235 44" stroke="#666" stroke-width="3.2" fill="none" stroke-linejoin="round" stroke-linecap="round" />
<path d="M58 20 L75 4" stroke="#666" stroke-width="3.2" fill="none" stroke-linejoin="round" stroke-linecap="round" />
<path d="M827 4 L833 44" stroke="#666" stroke-width="3.2" fill="none" stroke-linejoin="round" stroke-linecap="round" />
<path d="M1108 4 L1125 29 L1108 44" stroke="#666" stroke-width="3.2" fill="none" stroke-linejoin="round" stroke-linecap="round" />
<path d="M1125 29 L1152 4" stroke="#666" stroke-width="3.2" fill="none" stroke-linejoin="round" stroke-linecap="round" />
<path d="M1400 1006 L1416 978 L1431 952 L1461 938 L1500 949 L1530 931 L1545 906 L1562 889" stroke="#666" stroke-width="3.2" fill="none" stroke-linejoin="round" stroke-linecap="round" />
<path d="M1530 875 L1535 900 L1515 925" stroke="#666" stroke-width="3.2" fill="none" stroke-linejoin="round" stroke-linecap="round" />
<path d="M400 792 L361 825 L343 836 L320 864 L278 892 L232 918 L206 939 L180 959 L155 988 L139 1006" stroke="#8f7470" stroke-width="8" fill="none" stroke-linejoin="round" stroke-linecap="round" />
<path d="M400 792 L361 825 L343 836 L320 864 L278 892 L232 918 L206 939 L180 959 L155 988 L139 1006" stroke="#e6887c" stroke-width="6" fill="none" stroke-linejoin="round" stroke-linecap="round" />
<path d="M3 877 L33 903 L62 939 L85 970 L103 990 L134 996 L144 1006" stroke="#8f7470" stroke-width="8" fill="none" stroke-linejoin="round" stroke-linecap="round" />
<path d="M3 877 L33 903 L62 939 L85 970 L103 990 L134 996 L144 1006" stroke="#e6887c" stroke-width="6" fill="none" stroke-linejoin="round" stroke-linecap="round" />
<path d="M663 753 L648 800 L627 833 L624 872 L619 903 L606 934 L596 954 L580 962 L560 980 L550 1006" stroke="#8f7470" stroke-width="8" fill="none" stroke-linejoin="round" stroke-linecap="round" />
<path d="M663 753 L648 800 L627 833 L624 872 L619 903 L606 934 L596 954 L580 962 L560 980 L550 1006" stroke="#e6887c" stroke-width="6" fill="none" stroke-linejoin="round" stroke-linecap="round" />
<path d="M457 756 L485 774 L524 807 L544 833 L555 851" stroke="#8f7470" stroke-width="7" fill="none" stroke-linejoin="round" stroke-linecap="round" />
<path d="M457 756 L485 774 L524 807 L544 833 L555 851" stroke="#e6887c" stroke-width="5" fill="none" stroke-linejoin="round" stroke-linecap="round" />
<path d="M410 756 L408 807 L400 818" stroke="#8f7470" stroke-width="7" fill="none" stroke-linejoin="round" stroke-linecap="round" />
<path d="M410 756 L408 807 L400 818" stroke="#e6887c" stroke-width="5" fill="none" stroke-linejoin="round" stroke-linecap="round" />
<path d="M707 833 L720 877 L722 892 L745 895" stroke="#8f7470" stroke-width="7" fill="none" stroke-linejoin="round" stroke-linecap="round" />
<path d="M707 833 L720 877 L722 892 L745 895" stroke="#e6887c" stroke-width="5" fill="none" stroke-linejoin="round" stroke-linecap="round" />
<path d="M580 887 L606 908 L632 928 L658 934 L720 928 L743 931" stroke="#8f7470" stroke-width="8" fill="none" stroke-linejoin="round" stroke-linecap="round" />
<path d="M580 887 L606 908 L632 928 L658 934 L720 928 L743 931" stroke="#e6887c" stroke-width="6" fill="none" stroke-linejoin="round" stroke-linecap="round" />
<path d="M689 952 L715 953 L735 965 L750 970" stroke="#8f7470" stroke-width="8" fill="none" stroke-linejoin="round" stroke-linecap="round" />
<path d="M689 952 L715 953 L735 965 L750 970" stroke="#e6887c" stroke-width="6" fill="none" stroke-linejoin="round" stroke-linecap="round" />
<path d="M606 934 L640 900 L655 880" stroke="#8f7470" stroke-width="6" fill="none" stroke-linejoin="round" stroke-linecap="round" />
<path d="M606 934 L640 900 L655 880" stroke="#e6887c" stroke-width="4" fill="none" stroke-linejoin="round" stroke-linecap="round" />
<path d="M4 42 L21 33 L52 6" stroke="#8f7470" stroke-width="8" fill="none" stroke-linejoin="round" stroke-linecap="round" />
<path d="M4 42 L21 33 L52 6" stroke="#e6887c" stroke-width="6" fill="none" stroke-linejoin="round" stroke-linecap="round" />
<path d="M187 4 L200 25 L212 44" stroke="#8f7470" stroke-width="7" fill="none" stroke-linejoin="round" stroke-linecap="round" />
<path d="M187 4 L200 25 L212 44" stroke="#e6887c" stroke-width="5" fill="none" stroke-linejoin="round" stroke-linecap="round" />
<path d="M277 10 L296 44" stroke="#8f7470" stroke-width="7" fill="none" stroke-linejoin="round" stroke-linecap="round" />
<path d="M277 10 L296 44" stroke="#e6887c" stroke-width="5" fill="none" stroke-linejoin="round" stroke-linecap="round" />
<path d="M487 4 L500 23 L508 31 L462 35 L433 44" stroke="#8f7470" stroke-width="7" fill="none" stroke-linejoin="round" stroke-linecap="round" />
<path d="M487 4 L500 23 L508 31 L462 35 L433 44" stroke="#e6887c" stroke-width="5" fill="none" stroke-linejoin="round" stroke-linecap="round" />
<path d="M508 31 L517 44" stroke="#8f7470" stroke-width="7" fill="none" stroke-linejoin="round" stroke-linecap="round" />
<path d="M508 31 L517 44" stroke="#e6887c" stroke-width="5" fill="none" stroke-linejoin="round" stroke-linecap="round" />
<path d="M517 44 L556 40 L577 27 L619 6 L629 4" stroke="#8f7470" stroke-width="12" fill="none" stroke-linejoin="round" stroke-linecap="round" />
<path d="M517 44 L556 40 L577 27 L619 6 L629 4" stroke="#e6887c" stroke-width="10" fill="none" stroke-linejoin="round" stroke-linecap="round" />
<path d="M577 27 L629 29 L650 15 L675 5 L692 4" stroke="#8f7470" stroke-width="7" fill="none" stroke-linejoin="round" stroke-linecap="round" />
<path d="M577 27 L629 29 L650 15 L675 5 L692 4" stroke="#e6887c" stroke-width="5" fill="none" stroke-linejoin="round" stroke-linecap="round" />
<path d="M802 4 L806 44" stroke="#8f7470" stroke-width="7" fill="none" stroke-linejoin="round" stroke-linecap="round" />
<path d="M802 4 L806 44" stroke="#e6887c" stroke-width="5" fill="none" stroke-linejoin="round" stroke-linecap="round" />
<path d="M909 4 L912 44" stroke="#8f7470" stroke-width="6" fill="none" stroke-linejoin="round" stroke-linecap="round" />
<path d="M909 4 L912 44" stroke="#e6887c" stroke-width="4" fill="none" stroke-linejoin="round" stroke-linecap="round" />
<path d="M1402 1006 L1418 980 L1433 954 L1461 941 L1500 952 L1531 934 L1547 908 L1562 892" stroke="#8f7470" stroke-width="7" fill="none" stroke-linejoin="round" stroke-linecap="round" />
<path d="M1402 1006 L1418 980 L1433 954 L1461 941 L1500 952 L1531 934 L1547 908 L1562 892" stroke="#e6887c" stroke-width="5" fill="none" stroke-linejoin="round" stroke-linecap="round" />
<path d="M1418 978 L1454 996 L1469 1006" stroke="#8f7470" stroke-width="8" fill="none" stroke-linejoin="round" stroke-linecap="round" />
<path d="M1418 978 L1454 996 L1469 1006" stroke="#e6887c" stroke-width="6" fill="none" stroke-linejoin="round" stroke-linecap="round" />
<path d="M1531 934 L1562 962" stroke="#8f7470" stroke-width="7" fill="none" stroke-linejoin="round" stroke-linecap="round" />
<path d="M1531 934 L1562 962" stroke="#e6887c" stroke-width="5" fill="none" stroke-linejoin="round" stroke-linecap="round" />
<path d="M1531 753 L1557 787 L1562 825" stroke="#8f7470" stroke-width="7" fill="none" stroke-linejoin="round" stroke-linecap="round" />
<path d="M1531 753 L1557 787 L1562 825" stroke="#e6887c" stroke-width="5" fill="none" stroke-linejoin="round" stroke-linecap="round" />
<path d="M5 872 L64 908 L98 929 L129 931 L155 947 L196 947 L232 957 L284 990 L322 1003 L361 996 L400 1001" stroke="#5a5a5a" stroke-width="4.5" fill="none" stroke-linejoin="round" stroke-linecap="round" />
<path d="M5 872 L64 908 L98 929 L129 931 L155 947 L196 947 L232 957 L284 990 L322 1003 L361 996 L400 1001" stroke="#fff" stroke-width="2.1" fill="none" stroke-linejoin="round" stroke-linecap="round" stroke-dasharray="12 14" stroke-linecap="butt"/>
<path d="M560 753 L565 794 L555 815 L544 825 L516 823 L477 794 L434 761 L415 753" stroke="#5a5a5a" stroke-width="4.5" fill="none" stroke-linejoin="round" stroke-linecap="round" />
<path d="M560 753 L565 794 L555 815 L544 825 L516 823 L477 794 L434 761 L415 753" stroke="#fff" stroke-width="2.1" fill="none" stroke-linejoin="round" stroke-linecap="round" stroke-dasharray="12 14" stroke-linecap="butt"/>
<path d="M557 828 L570 877 L586 928 L606 959 L593 980 L586 1006" stroke="#5a5a5a" stroke-width="4.5" fill="none" stroke-linejoin="round" stroke-linecap="round" />
<path d="M557 828 L570 877 L586 928 L606 959 L593 980 L586 1006" stroke="#fff" stroke-width="2.1" fill="none" stroke-linejoin="round" stroke-linecap="round" stroke-dasharray="12 14" stroke-linecap="butt"/>
<path d="M563 828 L578 877 L594 925 L612 955 L640 930 L660 905" stroke="#5a5a5a" stroke-width="4.5" fill="none" stroke-linejoin="round" stroke-linecap="round" />
<path d="M563 828 L578 877 L594 925 L612 955 L640 930 L660 905" stroke="#fff" stroke-width="2.1" fill="none" stroke-linejoin="round" stroke-linecap="round" stroke-dasharray="12 14" stroke-linecap="butt"/>
<path d="M709 753 L707 769 L684 807 L668 851 L658 892 L648 916 L617 954 L596 980 L580 1006" stroke="#5a5a5a" stroke-width="4.5" fill="none" stroke-linejoin="round" stroke-linecap="round" />
<path d="M709 753 L707 769 L684 807 L668 851 L658 892 L648 916 L617 954 L596 980 L580 1006" stroke="#fff" stroke-width="2.1" fill="none" stroke-linejoin="round" stroke-linecap="round" stroke-dasharray="12 14" stroke-linecap="butt"/>
<path d="M606 959 L640 985 L665 1006" stroke="#5a5a5a" stroke-width="4.5" fill="none" stroke-linejoin="round" stroke-linecap="round" />
<path d="M606 959 L640 985 L665 1006" stroke="#fff" stroke-width="2.1" fill="none" stroke-linejoin="round" stroke-linecap="round" stroke-dasharray="12 14" stroke-linecap="butt"/>
<path d="M700 960 L725 950 L740 935" stroke="#5a5a5a" stroke-width="4.5" fill="none" stroke-linejoin="round" stroke-linecap="round" />
<path d="M700 960 L725 950 L740 935" stroke="#fff" stroke-width="2.1" fill="none" stroke-linejoin="round" stroke-linecap="round" stroke-dasharray="12 14" stroke-linecap="butt"/>
<path d="M502 4 L510 25 L529 44" stroke="#5a5a5a" stroke-width="4.5" fill="none" stroke-linejoin="round" stroke-linecap="round" />
<path d="M502 4 L510 25 L529 44" stroke="#fff" stroke-width="2.1" fill="none" stroke-linejoin="round" stroke-linecap="round" stroke-dasharray="12 14" stroke-linecap="butt"/>
<path d="M510 25 L509 44" stroke="#5a5a5a" stroke-width="4.5" fill="none" stroke-linejoin="round" stroke-linecap="round" />
<path d="M510 25 L509 44" stroke="#fff" stroke-width="2.1" fill="none" stroke-linejoin="round" stroke-linecap="round" stroke-dasharray="12 14" stroke-linecap="butt"/>
<path d="M650 44 L692 27 L733 19 L800 19" stroke="#5a5a5a" stroke-width="4.5" fill="none" stroke-linejoin="round" stroke-linecap="round" />
<path d="M650 44 L692 27 L733 19 L800 19" stroke="#fff" stroke-width="2.1" fill="none" stroke-linejoin="round" stroke-linecap="round" stroke-dasharray="12 14" stroke-linecap="butt"/>
<path d="M800 19 L946 17 L958 23 L983 44" stroke="#5a5a5a" stroke-width="4.5" fill="none" stroke-linejoin="round" stroke-linecap="round" />
<path d="M800 19 L946 17 L958 23 L983 44" stroke="#fff" stroke-width="2.1" fill="none" stroke-linejoin="round" stroke-linecap="round" stroke-dasharray="12 14" stroke-linecap="butt"/>
<path d="M1469 1006 L1505 972 L1541 941 L1562 923" stroke="#5a5a5a" stroke-width="4.5" fill="none" stroke-linejoin="round" stroke-linecap="round" />
<path d="M1469 1006 L1505 972 L1541 941 L1562 923" stroke="#fff" stroke-width="2.1" fill="none" stroke-linejoin="round" stroke-linecap="round" stroke-dasharray="12 14" stroke-linecap="butt"/>
<path d="M681 753 L673 769 L632 787 L580 805 L560 815 L552 828 L555 849 L539 872 L513 918 L485 970 L470 990 L452 1006" stroke="#1b3565" stroke-width="6.5" fill="none" stroke-linejoin="round" stroke-linecap="round" />
<path d="M681 753 L673 769 L632 787 L580 805 L560 815 L552 828 L555 849 L539 872 L513 918 L485 970 L470 990 L452 1006" stroke="#fff" stroke-width="2.6" fill="none" stroke-linejoin="round" stroke-linecap="round" stroke-dasharray="12 14" stroke-linecap="butt"/>
<path d="M470 4 L483 44" stroke="#1b3565" stroke-width="7" fill="none" stroke-linejoin="round" stroke-linecap="round" />
<path d="M470 4 L483 44" stroke="#fff" stroke-width="3" fill="none" stroke-linejoin="round" stroke-linecap="round" stroke-dasharray="9 9" stroke-linecap="butt"/>
<path d="M376 756 L345 794 L335 825 L320 856 L296 885 L281 913 L258 939 L219 954 L180 988 L160 1003" stroke="#5cb870" stroke-width="6" fill="none" stroke-linejoin="round" stroke-linecap="round" />
<path d="M281 916 L289 939 L322 952 L361 957 L374 975 L397 988" stroke="#93d0a4" stroke-width="5" fill="none" stroke-linejoin="round" stroke-linecap="round" />
<path d="M493 753 L467 782 L454 812 L444 846 L431 877 L421 908 L415 939 L405 972 L400 980" stroke="#5cb870" stroke-width="6" fill="none" stroke-linejoin="round" stroke-linecap="round" />
<path d="M400 983 L431 990 L467 988 L485 996 L498 1006" stroke="#93d0a4" stroke-width="5" fill="none" stroke-linejoin="round" stroke-linecap="round" />
<path d="M756 753 L758 787 L761 825 L771 851" stroke="#5cb870" stroke-width="6" fill="none" stroke-linejoin="round" stroke-linecap="round" />
<path d="M735 753 L715 787 L725 800 L743 833 L746 861 L753 869 L733 885 L725 913 L720 944 L704 965 L684 985 L658 1001 L648 1006" stroke="#5cb870" stroke-width="6" fill="none" stroke-linejoin="round" stroke-linecap="round" />
<path d="M717 926 L761 928 L782 939 L800 957" stroke="#5cb870" stroke-width="5" fill="none" stroke-linejoin="round" stroke-linecap="round" />
<path d="M771 851 L780 854 L803 868" stroke="#c5bb84" stroke-width="4" fill="none" stroke-linejoin="round" stroke-linecap="round" />
<path d="M803 869 L821 892 L832 913 L842 929" stroke="#5cb870" stroke-width="7" fill="none" stroke-linejoin="round" stroke-linecap="round" />
<path d="M842 934 L839 954 L834 977" stroke="#93d0a4" stroke-width="5" fill="none" stroke-linejoin="round" stroke-linecap="round" />
<path d="M780 939 L806 954 L832 977 L826 993" stroke="#5cb870" stroke-width="6" fill="none" stroke-linejoin="round" stroke-linecap="round" />
<path d="M834 980 L857 993 L875 1006" stroke="#93d0a4" stroke-width="5" fill="none" stroke-linejoin="round" stroke-linecap="round" />
<path d="M826 993 L800 1006" stroke="#93d0a4" stroke-width="5" fill="none" stroke-linejoin="round" stroke-linecap="round" />
<path d="M142 4 L152 17 L158 33 L165 44" stroke="#5cb870" stroke-width="7" fill="none" stroke-linejoin="round" stroke-linecap="round" />
<path d="M450 4 L458 25 L459 44" stroke="#5cb870" stroke-width="7" fill="none" stroke-linejoin="round" stroke-linecap="round" />
<path d="M698 6 L708 21 L709 44" stroke="#5cb870" stroke-width="7" fill="none" stroke-linejoin="round" stroke-linecap="round" />
<path d="M1029 44 L1046 27 L1071 12 L1083 4" stroke="#5cb870" stroke-width="7" fill="none" stroke-linejoin="round" stroke-linecap="round" />
<path d="M1526 1006 L1552 988 L1562 970" stroke="#5cb870" stroke-width="6" fill="none" stroke-linejoin="round" stroke-linecap="round" />
<path d="M1079 40 L1090 36" stroke="#2bd3d8" stroke-width="6" fill="none" stroke-linejoin="round" stroke-linecap="round" />
<path d="M493 753 L513 771 L539 787 L555 792 L568 805 L575 838 L591 861 L622 877 L640 887 L642 898 L630 908 L632 923 L648 932 L660 931 L676 926 L689 913 L709 918 L717 910 L733 912 L758 910 L771 918 L800 936" stroke="#3b0a80" stroke-width="3.6" fill="none" stroke-linejoin="round" stroke-linecap="round" stroke-dasharray="16 7 3 7"/>
<path d="M4 845 L20 860 L38 885 L60 910 L80 930 L100 955 L105 975 L115 995 L125 1006" stroke="#3b0a80" stroke-width="3.6" fill="none" stroke-linejoin="round" stroke-linecap="round" stroke-dasharray="16 7 3 7"/>
<path d="M139 758 L160 776 L181 792 L186 808 L169 815" stroke="#3b0a80" stroke-width="3.6" fill="none" stroke-linejoin="round" stroke-linecap="round" stroke-dasharray="16 7 3 7"/>
<path d="M165 800 L150 815 L140 835 L132 850 L145 868 L155 880 L155 905 L165 925 L168 955 L160 980 L150 1000" stroke="#3b0a80" stroke-width="3.6" fill="none" stroke-linejoin="round" stroke-linecap="round" stroke-dasharray="16 7 3 7"/>
<path d="M162 830 L172 860 L185 862" stroke="#3b0a80" stroke-width="3.6" fill="none" stroke-linejoin="round" stroke-linecap="round" stroke-dasharray="16 7 3 7"/>
<path d="M205 838 L215 826 L200 818" stroke="#3b0a80" stroke-width="3.6" fill="none" stroke-linejoin="round" stroke-linecap="round" stroke-dasharray="16 7 3 7"/>
<path d="M1055 4 L1059 20" stroke="#3b0a80" stroke-width="4" fill="none" stroke-linejoin="round" stroke-linecap="round" />
<path d="M785 925 L800 933" stroke="#3b0a80" stroke-width="4" fill="none" stroke-linejoin="round" stroke-linecap="round" />
<path d="M795 763 L819 794 L852 833 L883 867 L924 900 L960 921 L1002 941 L1022 962 L1029 996" stroke="#333" stroke-width="1.3" fill="none" stroke-linejoin="round" stroke-linecap="round" stroke-dasharray="12 10" stroke-linecap="butt"/>
<path d="M408 822 L440 823 L510 824" stroke="#555" stroke-width="1" fill="none" stroke-linejoin="round" stroke-linecap="round" stroke-dasharray="8 6" stroke-linecap="butt"/>
<path d="M385 760 L410 775" stroke="#555" stroke-width="1" fill="none" stroke-linejoin="round" stroke-linecap="round" stroke-dasharray="6 5" stroke-linecap="butt"/>
<path d="M1210 4 L1217 11 L1240 14 L1300 12 L1358 10 L1382 4" stroke="#8f7470" stroke-width="5.6" fill="none" stroke-linejoin="round" stroke-linecap="round" />
<path d="M1210 4 L1217 11 L1240 14 L1300 12 L1358 10 L1382 4" stroke="#e6887c" stroke-width="3.6" fill="none" stroke-linejoin="round" stroke-linecap="round" />
<path d="M1398 16 L1406 4" stroke="#5a5a5a" stroke-width="2" fill="none" stroke-linejoin="round" stroke-linecap="round" />
<path d="M1402 16 L1410 4" stroke="#5a5a5a" stroke-width="2" fill="none" stroke-linejoin="round" stroke-linecap="round" />
<path d="M1430 4 L1445 12 L1460 16" stroke="#3b0a80" stroke-width="4" fill="none" stroke-linejoin="round" stroke-linecap="round" />
<path d="M1470 4 L1455 14" stroke="#3b0a80" stroke-width="4" fill="none" stroke-linejoin="round" stroke-linecap="round" />
<path d="M1510 4 L1530 14 L1550 20 L1562 26" stroke="#3b0a80" stroke-width="4" fill="none" stroke-linejoin="round" stroke-linecap="round" />
<path d="M1440 4 L1470 10 L1500 8 L1540 16 L1562 40" stroke="#e9e32c" stroke-width="2.6" fill="none" stroke-linejoin="round" stroke-linecap="round" />
<path d="M1176 4 L1180 12" stroke="#e9e32c" stroke-width="2.6" fill="none" stroke-linejoin="round" stroke-linecap="round" />
<path d="M1415 4 L1425 16" stroke="#aec6f6" stroke-width="5" fill="none" stroke-linejoin="round" stroke-linecap="round" />
<path d="M1460 16 L1480 6 L1490 4" stroke="#aec6f6" stroke-width="5" fill="none" stroke-linejoin="round" stroke-linecap="round" />
<path d="M1550 20 L1556 30 L1560 44" stroke="#aec6f6" stroke-width="6" fill="none" stroke-linejoin="round" stroke-linecap="round" />
<text x="1229" y="25" font-size="19" font-weight="bold" fill="#111" font-family="Liberation Sans, Noto Sans CJK JP, sans-serif">埼</text>
<circle cx="341" cy="799" r="4.6" fill="#d8f0d0" stroke="#1414e0" stroke-width="2"/>
<circle cx="283" cy="915" r="4.6" fill="#d8f0d0" stroke="#1414e0" stroke-width="2"/>
<circle cx="418" cy="915" r="4.6" fill="#d8f0d0" stroke="#1414e0" stroke-width="2"/>
<circle cx="470" cy="781" r="4.6" fill="#d8f0d0" stroke="#1414e0" stroke-width="2"/>
<circle cx="400" cy="976" r="4.6" fill="#d8f0d0" stroke="#1414e0" stroke-width="2"/>
<circle cx="698" cy="6" r="4.6" fill="#d8f0d0" stroke="#1414e0" stroke-width="2"/>
<circle cx="1071" cy="13" r="4.6" fill="#d8f0d0" stroke="#1414e0" stroke-width="2"/>
<path d="M365.5 816Q380 810 394.5 816Q395.5 828 382.5 840Q380 841.5 377.5 840Q364.5 828 365.5 816z" fill="#2a6ef0"/>
<text x="380" y="829" font-size="13" fill="#fff" text-anchor="middle" font-family="Liberation Sans, sans-serif">246</text>
<path d="M619.5 805Q634 799 648.5 805Q649.5 817 636.5 829Q634 830.5 631.5 829Q618.5 817 619.5 805z" fill="#2a6ef0"/>
<text x="634" y="818" font-size="14" fill="#fff" text-anchor="middle" font-family="Liberation Sans, sans-serif">1</text>
<path d="M657.5 886Q672 880 686.5 886Q687.5 898 674.5 910Q672 911.5 669.5 910Q656.5 898 657.5 886z" fill="#2a6ef0"/>
<text x="672" y="899" font-size="14" fill="#fff" text-anchor="middle" font-family="Liberation Sans, sans-serif">15</text>
<path d="M52 4H71Q70 10 62 13Q55 10 52 4z" fill="#2a6ef0"/>
<rect x="391" y="938" width="37" height="24" rx="2" fill="#3f8f1f"/><text x="409.5" y="955" font-size="12.5" fill="#fff" text-anchor="middle" font-family="Liberation Sans, sans-serif">E83</text>
<rect x="1557" y="935" width="6" height="22" fill="#3f8f1f"/>
<g stroke="#2b2b3a" fill="none" stroke-width="1.4"><circle cx="926" cy="809" r="16"/><circle cx="926" cy="800.5" r="2.2"/><path d="M926 803V818M921 806H931M915 811Q917 819 926 819Q935 819 937 811M915 811l-1 5M915 811l5 2M937 811l1 5M937 811l-5 2"/></g>
<g stroke="#2b2b3a" fill="none" stroke-width="1.4"><circle cx="1414" cy="817" r="16"/><circle cx="1414" cy="808.5" r="2.2"/><path d="M1414 811V826M1409 814H1419M1403 819Q1405 827 1414 827Q1423 827 1425 819M1403 819l-1 5M1403 819l5 2M1425 819l1 5M1425 819l-5 2"/></g>
<g><circle cx="786" cy="891" r="16" fill="#fff" stroke="#222" stroke-width="1.4"/><path d="M786 879V902M776 889H796M781 901H791" stroke="#111" stroke-width="2.6" fill="none"/></g>
<g stroke="#4a5af0" stroke-width="1.2" fill="none"><circle cx="1388" cy="848" r="3"/><path d="M1388 842v12M1382 848h12M1384 844l8 8M1392 844l-8 8"/></g>
<g font-family="Liberation Sans, Noto Sans CJK JP, sans-serif" fill="#111"><circle cx="241" cy="11" r="6.5" fill="none" stroke="#111" stroke-width="1.4"/><circle cx="241" cy="11" r="3" fill="none" stroke="#111" stroke-width="1.2"/><text x="250" y="18" font-size="19">ふじみ野</text>
<circle cx="63" cy="905" r="6.5" fill="none" stroke="#111" stroke-width="1.4"/><circle cx="63" cy="905" r="3" fill="none" stroke="#111" stroke-width="1.2"/><text x="72" y="912" font-size="18" letter-spacing="2">町田</text>
<circle cx="638" cy="947" r="6.5" fill="none" stroke="#111" stroke-width="1.4"/><circle cx="638" cy="947" r="3" fill="none" stroke="#111" stroke-width="1.2"/><text x="648" y="954" font-size="18" letter-spacing="2">川崎</text>
<text x="3" y="952" font-size="12">97</text><circle cx="161" cy="999" r="1.8"/><text x="168" y="1004" font-size="13">100</text>
<text x="866" y="975" font-size="18" font-style="italic" transform="skewX(-12)" style="transform-box:fill-box;transform-origin:center" letter-spacing="1">多摩川</text>
<text x="1376" y="910" font-size="18" font-style="italic" font-weight="500" transform="skewX(-12)" style="transform-box:fill-box;transform-origin:center" letter-spacing="1">養老川</text>
<text x="1131" y="878" font-size="44" transform="skewX(-14)" style="transform-box:fill-box;transform-origin:center">東</text>
<text x="565" y="757" font-size="44" font-weight="bold">東</text><text x="837" y="757" font-size="44" font-weight="bold">京</text>
</g>
</svg>
<div class="abs" style="left:-4px;top:-4px;width:1566px;height:1008px">
<div class="abs" style="left:20px;top:20px;width:48px;height:90px;border:2px solid rgba(0,0,0,.25);border-radius:6px;background:linear-gradient(#fff,#ececec 30px)"></div><div class="abs" style="left:22px;top:22px;width:44px;height:44px;font:bold 33px/44px 'Liberation Sans',sans-serif;text-align:center;color:#000;padding-top:1px;padding-left:2px">+</div>
<div class="abs" style="left:1129px;top:16px;width:420px;height:34px;border:1px solid #a6a6a6;border-radius:5px;background:#fff;font-size:20px;line-height:31px;padding-left:16px;white-space:nowrap">標準地図</div>
<svg class="abs" style="left:1528px;top:25px" width="18" height="13" viewBox="0 0 18 13"><path d="M2.500 3L9 9.500L15.500 3" stroke="#000" stroke-width="2.200" fill="none"/></svg>
</div>

</div>
<div id="panel"></div>
<div class="btn" style="left:1588px;top:-7px;width:99px;height:39px;background:#fff;border-color:#ccc;border-radius:7px;line-height:34px">1画面</div>
<div class="btn" style="left:1693px;top:-7px;width:99px;height:39px;background:#fff;border-color:#ccc;border-radius:7px;line-height:34px">2画面</div>
<div class="btn" style="left:1799px;top:-7px;width:99px;height:39px;background:#fff;border-color:#ccc;border-radius:7px;line-height:34px">4画面</div>
<div class="abs" style="left:1861px;top:13px;width:47px;height:59px;background:#fff;border:1px solid #ccc;border-radius:7px"></div>
<svg class="abs" style="left:1872px;top:31px" width="26" height="26" viewBox="0 0 26 26"><path d="M1 3.200H24M1 12.900H24M1 22.600H24" stroke="#000" stroke-width="3"/></svg>
<span class="sp h3" style="left:1588px;top:82px">オーバーレイ設定</span>
<span class="sp lbl" style="left:1588px;top:128px">オーバーレイするマップ:</span>
<div class="sel" style="left:1588px;top:152px;width:300px;height:26px;line-height:23px;padding-left:6px">マップ1</div>
<svg class="abs" style="left:1866px;top:159px" width="16" height="12" viewBox="0 0 16 12"><path d="M2.500 3L8 8.500L13.500 3" stroke="#000" stroke-width="2" fill="none"/></svg>
<span class="sp lbl" style="left:1588px;top:210px">重ねる地図:</span>
<div class="sel" style="left:1588px;top:234px;width:300px;height:26px;line-height:23px;padding-left:6px">--- オーバーレイなし ---</div>
<svg class="abs" style="left:1866px;top:241px" width="16" height="12" viewBox="0 0 16 12"><path d="M2.500 3L8 8.500L13.500 3" stroke="#000" stroke-width="2" fill="none"/></svg>
<span class="sp lbl" style="left:1588px;top:292px">透明度:</span>
<div class="abs" style="left:1592px;top:318px;width:192px;height:12px;border-radius:6px;background:#efefef;border:1px solid #b8b8b8"></div>
<div class="abs" style="left:1592px;top:318px;width:116px;height:12px;border-radius:6px;background:#0473ce"></div>
<div class="abs" style="left:1694px;top:312.500px;width:22.500px;height:22.500px;border-radius:12px;background:#0473ce"></div>
<span class="sp lbl" style="left:1794px;top:327px">60%</span>
<div class="btn" style="left:1588px;top:343px;width:124px;height:38px;line-height:36px">キャンセル</div>
<div class="abs" style="left:1595px;top:402px;width:18px;height:18px;border-radius:3px;background:#0473ce"></div>
<svg class="abs" style="left:1595px;top:402px" width="18" height="18" viewBox="0 0 19 19"><path d="M4.500 9.800L8 13.200L14.500 5.800" stroke="#fff" stroke-width="2.600" fill="none"/></svg>
<span class="sp lbl" style="left:1624px;top:412px">オーバーレイ表示</span>
<span class="sp h3" style="left:1588px;top:478px"><i>CSV</i>でマップを追加</span>
<div class="btn" style="left:1588px;top:527px;width:185px;height:37px;line-height:35px">CSVデータを追加</div>
<div class="btn" style="left:1588px;top:589px;width:205px;height:37px;line-height:35px">CSVデータをクリア</div>
<span class="sp h3" style="left:1588px;top:678px"><b>URL</b>でマップを追加</span>
<div class="inp" style="left:1588px;top:724px;width:152px;height:32px;line-height:28px;padding-left:5px">URLを入力...</div>
<div class="inp" style="left:1746px;top:724px;width:152px;height:32px;line-height:28px;padding-left:5px">地図名を入力...</div>
<div class="btn" style="left:1588px;top:768px;width:310px;height:38px;line-height:36px">URL地図を追加</div>
<div class="btn" style="left:1588px;top:831px;width:204px;height:38px;line-height:36px">URLデータをクリア</div>
<div class="abs" style="left:1578px;top:906px;width:330px;height:44px;background:#f0f0f0;border:1px solid #cdcdcd;border-radius:7px"></div>
<span class="sp" style="left:1588px;top:916px;font-size:20px;font-weight:bold;line-height:24px">About <span style="font-size:24px;line-height:0;position:relative;top:1px;margin-left:-2px">▼</span></span>
<div class="abs" style="left:1578px;top:962px;width:228px;height:70px;background:#0a77d5;border-radius:9px"></div>
<span class="sp lbl" style="left:1596px;top:993.500px;color:#fff">災害用地図を比較</span>

<div id="dlg"><div class="abs" style="left:-7px;top:-45px;width:1919px;height:1008px">
<div class="abs" style="left:7px;top:45px;width:1559px;height:43px;background:#202126"></div>
<div class="abs" style="left:7px;top:88px;width:1559px;height:74px;background:#191919"></div>
<div class="abs" style="left:7px;top:162px;width:1559px;height:48px;background:#202020"></div>
<div class="abs" style="left:7px;top:618px;width:1559px;height:134px;background:#383838"></div>
<!-- title -->
<svg class="abs" style="left:18px;top:53px" width="24" height="24" viewBox="2 2 44 44">
<circle cx="24" cy="24" r="22" fill="#fff"/>
<path d="M24 2a22 22 0 0 1 19.05 11H24a11 11 0 0 0-9.53 5.5L4.95 13A22 22 0 0 1 24 2z" fill="#ea4335"/>
<path d="M43.05 13A22 22 0 0 1 24 46l9.53-16.5A11 11 0 0 0 33.53 18.5H24V13z" fill="#fbbc04"/>
<path d="M4.95 13l9.52 16.5A11 11 0 0 0 24 35l9.53-5.5L24 46A22 22 0 0 1 4.95 13z" fill="#34a853"/>
<circle cx="24" cy="24" r="10.5" fill="#fff"/><circle cx="24" cy="24" r="8.2" fill="#4285f4"/>
</svg>
<svg class="abs" style="left:1533px;top:57px" width="17" height="17" viewBox="0 0 17 17"><path d="M1 1L16 16M16 1L1 16" stroke="#fff" stroke-width="1.4" fill="none"/></svg>
<!-- nav arrows -->
<svg class="abs" style="left:28px;top:113px" width="24" height="24" viewBox="0 0 24 24"><path d="M20 12H3.500M10.800 4.700L3.500 12L10.800 19.300" stroke="#9d9d9d" stroke-width="2.400" fill="none" stroke-linecap="round" stroke-linejoin="round"/></svg>
<svg class="abs" style="left:81px;top:113px" width="24" height="24" viewBox="0 0 24 24"><path d="M3.500 12H20M12.700 4.700L20 12L12.700 19.300" stroke="#9d9d9d" stroke-width="2.400" fill="none" stroke-linecap="round" stroke-linejoin="round"/></svg>
<svg class="abs" style="left:129px;top:118px" width="18" height="14" viewBox="0 0 18 14"><path d="M3.500 4.300L8.800 9.600L14.100 4.300" stroke="#8c8c8c" stroke-width="2.400" fill="none" stroke-linecap="round" stroke-linejoin="round"/></svg>
<svg class="abs" style="left:172px;top:113px" width="24" height="24" viewBox="0 0 24 24"><path d="M12 22V4M3.800 12.200L12 4L20.200 12.200" stroke="#fff" stroke-width="2.200" fill="none" stroke-linecap="round" stroke-linejoin="round"/></svg>
<!-- address -->
<div class="box" style="left:215px;top:98px;width:1023px;height:53px"></div>
<svg class="abs" style="left:227px;top:114px" width="24" height="19" viewBox="0 0 24 19"><defs><linearGradient id="fg" x1="0" y1="0" x2="1" y2="1"><stop offset="0" stop-color="#ffe597"/><stop offset="1" stop-color="#f8c53a"/></linearGradient></defs><path d="M1 2.5A1.5 1.5 0 0 1 2.5 1H8l2.5 2.5H21.5A1.5 1.5 0 0 1 23 5V16.5A1.5 1.5 0 0 1 21.5 18H2.5A1.5 1.5 0 0 1 1 16.5z" fill="#f0a81c"/><path d="M1 6.2A1.5 1.5 0 0 1 2.5 4.7H21.5A1.5 1.5 0 0 1 23 6.2V16.5A1.5 1.5 0 0 1 21.5 18H2.5A1.5 1.5 0 0 1 1 16.5z" fill="url(#fg)"/></svg>
<svg class="abs" style="left:260px;top:118px" width="10" height="14" viewBox="0 0 10 14"><path d="M3 2.5L7.5 7L3 11.5" stroke="#fff" stroke-width="1.8" fill="none"/></svg>
<svg class="abs" style="left:370px;top:118px" width="10" height="14" viewBox="0 0 10 14"><path d="M3 2.5L7.5 7L3 11.5" stroke="#fff" stroke-width="1.8" fill="none"/></svg>
<svg class="abs" style="left:446px;top:118px" width="10" height="14" viewBox="0 0 10 14"><path d="M3 2.5L7.5 7L3 11.5" stroke="#fff" stroke-width="1.8" fill="none"/></svg>
<svg class="abs" style="left:575px;top:118px" width="10" height="14" viewBox="0 0 10 14"><path d="M3 2.5L7.5 7L3 11.5" stroke="#fff" stroke-width="1.8" fill="none"/></svg>
<svg class="abs" style="left:1150px;top:116px" width="20" height="14" viewBox="0 0 20 14"><path d="M2.5 3L10 10.5L17.5 3" stroke="#fff" stroke-width="1.5" fill="none"/></svg>
<svg class="abs" style="left:1199px;top:111px" width="24" height="24" viewBox="0 0 24 24"><path d="M20 8A9 9 0 1 0 21 12" stroke="#fff" stroke-width="1.6" fill="none"/><path d="M20.5 2.5V8.2H14.8" stroke="#fff" stroke-width="1.6" fill="none"/></svg>
<!-- search -->
<div class="box" style="left:1250px;top:98px;width:304px;height:53px"></div>
<svg class="abs" style="left:1513px;top:115px" width="20" height="20" viewBox="0 0 20 20"><circle cx="12.5" cy="7.5" r="4.2" stroke="#9d9d9d" stroke-width="2.600" fill="none"/><path d="M9.500 10.500L3 17" stroke="#9d9d9d" stroke-width="2.800" stroke-linecap="round"/></svg>
<!-- toolbar -->
<svg class="abs" style="left:76px;top:182px" width="12" height="8" viewBox="0 0 12 8"><path d="M1.5 1.5H10.5L6 6z" fill="#c8c8c8"/></svg>
<svg class="abs" style="left:1388px;top:173px" width="24" height="24" viewBox="0 0 24 24"><rect x="0" y="0" width="24" height="24" rx="3" fill="#b4b4b4"/><path d="M3.500 4.500H21M3.500 9.500H21M3.500 14.500H21M3.500 19.500H21" stroke="#111" stroke-width="1.100"/></svg>
<svg class="abs" style="left:1424px;top:182px" width="12" height="8" viewBox="0 0 12 8"><path d="M1 1H10.500L5.750 6.300z" fill="#cdcdcd"/></svg>
<svg class="abs" style="left:1465px;top:173px" width="24" height="24" viewBox="0 0 24 24"><defs><linearGradient id="pb" x1="0" y1="0" x2="1" y2="1"><stop offset="0" stop-color="#2aa4ec"/><stop offset="1" stop-color="#0b78d4"/></linearGradient></defs><rect x="0" y="0" width="24" height="24" rx="3.500" fill="#b6b6b6"/><rect x="2.300" y="3.300" width="19.400" height="17.400" rx="1.500" fill="#0a0a0a"/><rect x="3.300" y="4.300" width="10" height="15.400" fill="#fff"/><rect x="13.300" y="4.300" width="7.400" height="15.400" fill="url(#pb)"/></svg>
<svg class="abs" style="left:1519px;top:173px" width="24" height="24" viewBox="0 0 24 24"><defs><linearGradient id="hb" x1="0" y1="0" x2="1" y2="1"><stop offset="0" stop-color="#25a0ea"/><stop offset="1" stop-color="#0b78d4"/></linearGradient></defs><circle cx="12" cy="12" r="12" fill="url(#hb)"/><text x="12" y="18" font-size="17" fill="#fff" text-anchor="middle" font-family="Liberation Sans, sans-serif">?</text></svg>
<!-- sidebar -->
<div class="abs" style="left:10px;top:316px;width:205px;height:47px;background:#323232;border-radius:4px"></div>
<div class="abs" style="left:226px;top:237px;width:5px;height:118px;background:#9f9f9f;border-radius:3px"></div>
<div class="abs" style="left:242px;top:210px;width:4px;height:408px;background:#272727"></div>
<div class="abs" style="left:22px;top:531px;width:182px;height:1px;background:#545454"></div>
<svg class="abs" style="left:57px;top:232px" width="26" height="25" viewBox="0 0 26 25"><defs><linearGradient id="hg" x1="0" y1="0" x2="0" y2="1"><stop offset="0" stop-color="#f4f4f4"/><stop offset="1" stop-color="#b9b9b9"/></linearGradient></defs><path d="M4 11L13 3.5L22 11V23.5H16V15.5H10V23.5H4z" fill="url(#hg)"/><path d="M1.8 12.6L13 2.6L24.2 12.6" stroke="#f2780c" stroke-width="3" fill="none" stroke-linecap="round" stroke-linejoin="round"/></svg>
<svg class="abs" style="left:57px;top:279px" width="26" height="26" viewBox="0 0 26 26"><defs><linearGradient id="gg" x1="0" y1="0" x2="0" y2="1"><stop offset="0" stop-color="#2a9df0"/><stop offset="1" stop-color="#0f6fd0"/></linearGradient></defs><rect x="4.5" y="4" width="20" height="21" rx="2.5" fill="#1667c0"/><rect x="1" y="1" width="20" height="21" rx="2.5" fill="url(#gg)"/><path d="M1.5 19.5L10.5 11L20.5 20V19.5A2.5 2.5 0 0 1 18 22H3.5A2.5 2.5 0 0 1 1.500 19.5z" fill="#fff"/><path d="M1.5 19.5L10.500 11L20.5 20" fill="none"/><circle cx="15.500" cy="6.500" r="1.600" fill="#fff"/></svg>
<svg class="abs" style="left:24px;top:333px" width="18" height="14" viewBox="0 0 18 14"><path d="M2.5 3.500L9 10L15.500 3.500" stroke="#fff" stroke-width="2" fill="none" stroke-linecap="round" stroke-linejoin="round"/></svg>
<svg class="abs" style="left:57px;top:331px" width="26" height="18" viewBox="0 0 26 18"><path d="M6.5 17A5.300 5.300 0 0 1 5.300 6.600A7 7 0 0 1 18.200 5.200A5.900 5.900 0 0 1 20 17z" fill="#1490df"/><path d="M5.300 6.600A7 7 0 0 1 18.200 5.200L9.500 11z" fill="#0a5fb5"/><path d="M9.500 11L18.200 5.200A5.900 5.900 0 0 1 24.800 9.500L16 14z" fill="#1276cf"/><path d="M1.500 12A5.300 5.300 0 0 0 6.500 17H20A5.900 5.900 0 0 0 24.800 9.500L14 15.500L5.300 9z" fill="#28a8ea"/></svg>
<svg class="abs" style="left:39px;top:380px" width="12" height="16" viewBox="0 0 12 16"><path d="M3 2L9 8L3 14" stroke="#d0d0d0" stroke-width="2" fill="none" stroke-linecap="round" stroke-linejoin="round"/></svg>
<svg class="abs" style="left:39px;top:428px" width="12" height="16" viewBox="0 0 12 16"><path d="M3 2L9 8L3 14" stroke="#d0d0d0" stroke-width="2" fill="none" stroke-linecap="round" stroke-linejoin="round"/></svg>
<svg class="abs" style="left:39px;top:476px" width="12" height="16" viewBox="0 0 12 16"><path d="M3 2L9 8L3 14" stroke="#d0d0d0" stroke-width="2" fill="none" stroke-linecap="round" stroke-linejoin="round"/></svg>
<svg class="abs" style="left:70px;top:378px" width="24" height="19" viewBox="0 0 24 19"><defs><linearGradient id="dg" x1="0" y1="0" x2="1" y2="1"><stop offset="0" stop-color="#35d0e0"/><stop offset="1" stop-color="#0c74c8"/></linearGradient></defs><rect x="0" y="0.500" width="24" height="17.500" rx="1.500" fill="url(#dg)"/><rect x="2" y="3" width="1.600" height="1.600" fill="#fff"/><rect x="2" y="6" width="1.600" height="1.600" fill="#fff"/><rect x="19.500" y="17" width="3" height="1" fill="#cfe"/></svg>
<svg class="abs" style="left:58px;top:571px" width="24" height="19" viewBox="0 0 24 19"><rect x="0" y="0.500" width="24" height="17.500" rx="1.500" fill="url(#dg)"/><rect x="2" y="3" width="1.600" height="1.600" fill="#fff"/><rect x="2" y="6" width="1.600" height="1.600" fill="#fff"/><rect x="19.500" y="17" width="3" height="1" fill="#cfe"/></svg>
<svg class="abs" style="left:72px;top:423px" width="20" height="26" viewBox="0 0 20 26"><defs><linearGradient id="dc" x1="0" y1="0" x2="0" y2="1"><stop offset="0" stop-color="#c3d0e6"/><stop offset="1" stop-color="#8097bd"/></linearGradient></defs><rect x="1" y="1" width="18" height="24" rx="2" fill="url(#dc)"/><rect x="10.500" y="7.500" width="5.500" height="5" fill="#f4f7fc"/><path d="M4 8.500H9M4 11.500H9M4 15H16M4 18H16" stroke="#f4f7fc" stroke-width="1.300"/></svg>
<svg class="abs" style="left:70.500px;top:472.700px" width="22" height="22" viewBox="0 0 23 23"><defs><linearGradient id="pg" x1="0" y1="0" x2="0" y2="1"><stop offset="0" stop-color="#2ea3f2"/><stop offset="1" stop-color="#0f6fd0"/></linearGradient></defs><rect x="0.500" y="0.500" width="22" height="22" rx="2.500" fill="url(#pg)"/><path d="M1 20.500L10.500 10.500L22 21A2.500 2.500 0 0 1 20 22.500H3A2.500 2.500 0 0 1 1 20.500z" fill="#fff"/><circle cx="17" cy="5.500" r="1.700" fill="#fff"/></svg>
<svg class="abs" style="left:193px;top:571px" width="19" height="19" viewBox="0 0 18 18"><path d="M10.500 1.500L16.500 7.500L14.800 8.300L12.600 8L9.800 11.800L10 14.800L8.800 16L5.800 12.900L2 16.500L1.500 16L5.100 12.200L2 9.200L3.200 8L6.200 8.200L10 5.400L9.700 3.200z" fill="#8f9396" stroke="#8f9396" stroke-width=".6"/></svg>
<div class="abs" style="left:68px;top:617px;width:2px;height:2px;background:#3ac08a"></div>

<!-- headers -->
<div class="abs" style="left:705px;top:210px;width:1px;height:42px;background:#4a4a4a"></div>
<div class="abs" style="left:948px;top:210px;width:1px;height:42px;background:#4a4a4a"></div>
<div class="abs" style="left:1151px;top:210px;width:1px;height:42px;background:#4a4a4a"></div>
<div class="abs" style="left:1286px;top:210px;width:1px;height:42px;background:#4a4a4a"></div>
<svg class="abs" style="left:487px;top:211px" width="14" height="8" viewBox="0 0 14 8"><path d="M2 6.5L7 1.5L12 6.5" stroke="#bdbdbd" stroke-width="1.2" fill="none"/></svg>
<!-- rows -->
<svg class="abs" style="left:274px;top:270px" width="24" height="19" viewBox="0 0 24 19"><path d="M1 2.5A1.5 1.5 0 0 1 2.5 1H8l2.5 2.5H21.5A1.5 1.5 0 0 1 23 5V16.5A1.5 1.5 0 0 1 21.5 18H2.5A1.5 1.5 0 0 1 1 16.5z" fill="#f0a81c"/><path d="M1 6.2A1.5 1.5 0 0 1 2.5 4.7H21.5A1.5 1.5 0 0 1 23 6.2V16.5A1.5 1.5 0 0 1 21.5 18H2.5A1.5 1.5 0 0 1 1 16.5z" fill="url(#fg)"/></svg>
<svg class="abs" style="left:276px;top:311px" width="20" height="24" viewBox="0 0 20 24"><path d="M1.5 1.5H13L18.5 7V22.5H1.5z" fill="#f4f4f4" stroke="#bdbdbd" stroke-width="1"/><path d="M13 1.5V7H18.5" fill="#dcdcdc" stroke="#bdbdbd" stroke-width="1"/><path d="M4.5 10.5H15.5M4.5 13.5H15.5M4.5 16.5H15.5M4.5 19.5H12" stroke="#a9a9a9" stroke-width="1.2"/></svg>
<!-- bottom -->
<div class="abs" style="left:296px;top:645px;width:944px;height:33px;border:1px solid #f0f0f0;background:#383838"></div>
<div class="abs" style="left:300px;top:650px;width:1px;height:23px;background:#e8e8e8"></div>
<svg class="abs" style="left:1219px;top:657px" width="14" height="10" viewBox="0 0 14 10"><path d="M2 2.5L7 7.5L12 2.5" stroke="#d0d0d0" stroke-width="1.2" fill="none"/></svg>
<div class="abs" style="left:1258px;top:645px;width:282px;height:33px;border:1px solid #8a8a8a;background:#383838"></div>
<svg class="abs" style="left:1519px;top:657px" width="14" height="10" viewBox="0 0 14 10"><path d="M2 2.5L7 7.5L12 2.5" stroke="#d0d0d0" stroke-width="1.2" fill="none"/></svg>
<div class="abs" style="left:1259px;top:688px;width:130px;height:37px;border:1px solid #f0f0f0;border-radius:5px;background:#333"></div>
<div class="abs" style="left:1409px;top:688px;width:130px;height:37px;border:1px solid #8e8e8e;border-radius:5px;background:#333"></div>
<svg class="abs" style="left:1551px;top:738px" width="13" height="13" viewBox="0 0 13 13"><g fill="#c8c8c8"><rect x="9" y="1" width="2.4" height="2.4"/><rect x="5" y="5" width="2.4" height="2.4"/><rect x="9" y="5" width="2.4" height="2.4"/><rect x="1" y="9" width="2.4" height="2.4"/><rect x="5" y="9" width="2.4" height="2.4"/><rect x="9" y="9" width="2.4" height="2.4"/></g></svg>
<span class="t" style="left:49.0px;top:65px;font-size:18px;color:#ffffff;transform:scaleX(0.9734)">開く</span>
<span class="t" style="left:282.0px;top:124px;font-size:18px;color:#ffffff;transform:scaleX(0.8570)">山本コロタ</span>
<span class="t" style="left:391.0px;top:124px;font-size:18px;color:#ffffff;transform:scaleX(0.9542)">spark</span>
<span class="t" style="left:466.0px;top:124px;font-size:18px;color:#ffffff;transform:scaleX(1.0209)">map.project</span>
<span class="t" style="left:1260.0px;top:125px;font-size:18px;color:#646464;transform:scaleX(0.9931)">map.projectの検索</span>
<span class="t" style="left:35.0px;top:185px;font-size:18px;color:#ffffff;transform:scaleX(0.9722)">整理</span>
<span class="t" style="left:132.0px;top:185px;font-size:18px;color:#ffffff;transform:scaleX(0.7709)">新しいフォルダー</span>
<span class="t" style="left:86.0px;top:244px;font-size:18px;color:#ffffff;transform:scaleX(0.8061)">ホーム</span>
<span class="t" style="left:86.0px;top:292px;font-size:18px;color:#ffffff;transform:scaleX(0.7119)">ギャラリー</span>
<span class="t" style="left:85.0px;top:340px;font-size:18px;color:#ffffff;transform:scaleX(0.9120)">コロタ - 個人用</span>
<span class="t" style="left:98.0px;top:388px;font-size:18px;color:#ffffff;transform:scaleX(0.7316)">デスクトップ</span>
<span class="t" style="left:96.0px;top:436px;font-size:18px;color:#ffffff;transform:scaleX(0.7625)">ドキュメント</span>
<span class="t" style="left:97.0px;top:484px;font-size:18px;color:#ffffff;transform:scaleX(0.7683)">ピクチャ</span>
<span class="t" style="left:86.0px;top:580px;font-size:18px;color:#ffffff;transform:scaleX(0.7316)">デスクトップ</span>
<span class="t" style="left:292.0px;top:232px;font-size:18px;color:#dedede;transform:scaleX(1.0035)">名前</span>
<span class="t" style="left:714.0px;top:232px;font-size:18px;color:#dedede;transform:scaleX(1.0002)">更新日時</span>
<span class="t" style="left:958.0px;top:232px;font-size:18px;color:#dedede;transform:scaleX(0.9722)">種類</span>
<span class="t" style="left:1160.0px;top:232px;font-size:18px;color:#dedede;transform:scaleX(0.7875)">サイズ</span>
<span class="t" style="left:303.0px;top:281px;font-size:18px;color:#ffffff;transform:scaleX(0.9825)">images</span>
<span class="t" style="left:714.0px;top:281px;font-size:18px;color:#ffffff;transform:scaleX(1.0205)">2025/09/25 18:30</span>
<span class="t" style="left:957.0px;top:281px;font-size:18px;color:#ffffff;transform:scaleX(0.7307)">ファイル フォルダー</span>
<span class="t" style="left:303.0px;top:324px;font-size:18px;color:#ffffff;transform:scaleX(0.8022)">サンプルCSVデータ.csv</span>
<span class="t" style="left:714.0px;top:324px;font-size:18px;color:#ffffff;transform:scaleX(1.0303)">2025/09/20 11:48</span>
<span class="t" style="left:958.0px;top:324px;font-size:18px;color:#ffffff;transform:scaleX(0.9646)">Comma Separated V...</span>
<span class="t" style="left:1230.0px;top:324px;font-size:18px;color:#ffffff;transform:scaleX(0.9175)">57 KB</span>
<span class="t" style="left:190.0px;top:662px;font-size:18px;color:#ffffff;transform:scaleX(0.8000)">ファイル名(N):</span>
<span class="t" style="left:1262.0px;top:662px;font-size:18px;color:#ffffff;transform:scaleX(0.8294)">CSV ファイル (*.csv)</span>
<span class="t" style="left:1296.0px;top:707px;font-size:18px;color:#ffffff;transform:scaleX(0.8884)">開く(O)</span>
<span class="t" style="left:1438.0px;top:707px;font-size:18px;color:#ffffff;transform:scaleX(0.7668)">キャンセル</span>
</div></div>

</body>
</html>
